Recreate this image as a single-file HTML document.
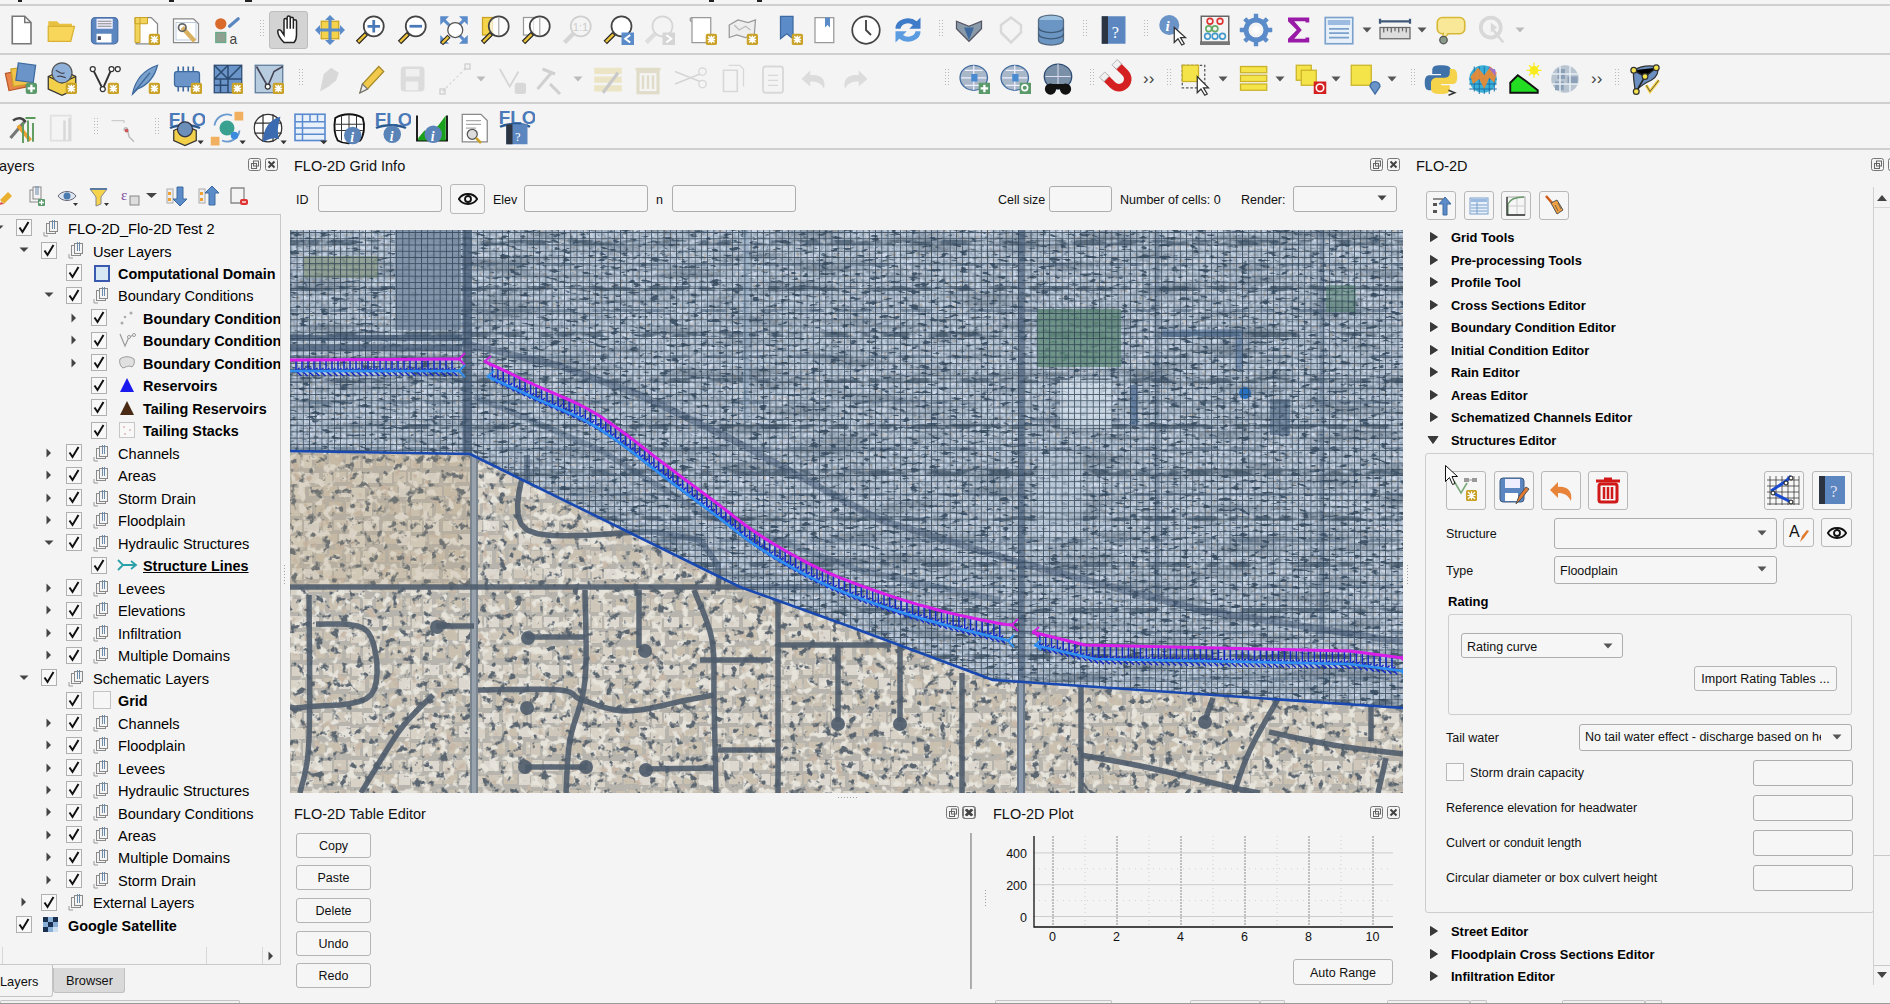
<!DOCTYPE html><html><head><meta charset="utf-8"><style>
html,body{margin:0;padding:0;}
body{width:1890px;height:1004px;position:relative;overflow:hidden;background:#f4f4f4;font-family:"Liberation Sans", sans-serif;}
.t{position:absolute;white-space:nowrap;font-family:"Liberation Sans", sans-serif;}
.inp{position:absolute;box-sizing:border-box;border:1px solid #adadad;border-radius:3px;background:#f6f6f6;}
.btn{position:absolute;box-sizing:border-box;border:1px solid #b4b4b4;border-radius:3px;background:#f6f6f6;font-size:12.5px;text-align:center;color:#111;padding-top:1px;}
.sep{position:absolute;height:2px;background:#cdcdcd;}
</style></head><body>
<div style="position:absolute;left:0px;top:0px;width:1890px;height:4px;background:#f4f4f4"></div><div style="position:absolute;left:18px;top:0px;width:4px;height:2px;background:#222"></div><div style="position:absolute;left:169px;top:0px;width:5px;height:2px;background:#222"></div><div style="position:absolute;left:245px;top:0px;width:7px;height:2px;background:#222"></div><div style="position:absolute;left:709px;top:0px;width:5px;height:2px;background:#222"></div><div style="position:absolute;left:757px;top:0px;width:5px;height:2px;background:#222"></div><div style="position:absolute;left:0px;top:4px;width:1890px;height:2px;background:#d0d0d0"></div><div style="position:absolute;left:0px;top:53px;width:1890px;height:2px;background:#cfcfcf"></div><div style="position:absolute;left:0px;top:102px;width:1890px;height:2px;background:#cfcfcf"></div><div style="position:absolute;left:0px;top:148px;width:1890px;height:2px;background:#cfcfcf"></div><div style="position:absolute;left:269px;top:11px;width:39px;height:38px;box-sizing:border-box;background:#d3d3d3;border:1px solid #bdbdbd;border-radius:3px"></div><svg style="position:absolute;left:1.0px;top:10.0px" width="40" height="40" viewBox="0 0 32 32"><path d="M9 5h10l5 5v17H9z" fill="#fff" stroke="#777" stroke-width="1.3"/><path d="M19 5v5h5" fill="none" stroke="#777" stroke-width="1.2"/></svg><svg style="position:absolute;left:42.0px;top:10.0px" width="40" height="40" viewBox="0 0 32 32"><path d="M5 9h7l2 2h10v4H5z" fill="#e8c040"/><path d="M5 13h21l-3 12H5z" fill="#f7d65a" stroke="#d9b235" stroke-width="1"/></svg><svg style="position:absolute;left:84.0px;top:10.0px" width="40" height="40" viewBox="0 0 32 32"><rect x="6" y="6" width="21" height="21" rx="3" fill="#5b86c0" stroke="#4a72a8"/><rect x="10" y="7" width="13" height="8" fill="#eef"/><path d="M11 9h11M11 11h11M11 13h11" stroke="#888" stroke-width="0.8"/><rect x="10" y="19" width="12" height="7" fill="#fff"/><rect x="11" y="21" width="2.5" height="3" fill="#445"/></svg><svg style="position:absolute;left:125.0px;top:10.0px" width="40" height="40" viewBox="0 0 32 32"><path d="M9 6h12l5 5v16H9z" fill="#fff" stroke="#888"/><path d="M8 6h4v20H8zM8 6h10v5H8z" fill="#f3d45a" stroke="#c9a227" stroke-width="0.8"/><rect x="19" y="19" width="9" height="9" rx="1.5" fill="#c9a227"/><path d="M23.5 20.5v6M20.5 23.5h6M21 21l5 5M26 21l-5 5" stroke="#fff" stroke-width="1.2"/></svg><svg style="position:absolute;left:166.0px;top:10.0px" width="40" height="40" viewBox="0 0 32 32"><path d="M6 7h16l4 4v15H6z" fill="#fff" stroke="#888"/><rect x="8" y="10" width="16" height="14" fill="none" stroke="#bcd" stroke-width="0.8"/><path d="M13 14l10 11" stroke="#d8b060" stroke-width="3.5"/><circle cx="13" cy="14" r="3" fill="none" stroke="#666" stroke-width="1.4"/></svg><svg style="position:absolute;left:207.0px;top:10.0px" width="40" height="40" viewBox="0 0 32 32"><circle cx="11" cy="11" r="4.5" fill="#d96a2b"/><path d="M18 13l7-6" stroke="#5b86c0" stroke-width="2.5" stroke-linecap="round"/><rect x="7" y="18" width="8" height="8" fill="#8fa090" stroke="#6a8"/><text x="18" y="27" font-size="11" font-family="Liberation Sans" fill="#444">a</text></svg><svg style="position:absolute;left:269.0px;top:10.0px" width="40" height="40" viewBox="0 0 32 32"><path d="M12 26c-3-3-5-7-5-9 0-1.5 2-1.5 3 0l2 3V8c0-1.5 2.5-1.5 2.5 0v7V6c0-1.5 2.5-1.5 2.5 0v9V7c0-1.5 2.5-1.5 2.5 0v8 -6c0-1.5 2.5-1.5 2.5 0v11c0 3-1 5-2 6z" fill="#fff" stroke="#222" stroke-width="1.2"/></svg><svg style="position:absolute;left:310.0px;top:10.0px" width="40" height="40" viewBox="0 0 32 32"><rect x="9" y="9" width="14" height="14" fill="#f5d34a" stroke="#c9a227"/><path d="M16 4l4 4h-8zM16 28l4-4h-8zM4 16l4-4v8zM28 16l-4-4v8z" fill="#5b8bc9"/><path d="M16 6v20M6 16h20" stroke="#5b8bc9" stroke-width="2.5"/></svg><svg style="position:absolute;left:350.0px;top:10.0px" width="40" height="40" viewBox="0 0 32 32"><circle cx="19" cy="13" r="8" fill="#fff" stroke="#444" stroke-width="1.4"/><path d="M19 8v10M14 13h10" stroke="#4a78b8" stroke-width="2.2"/><path d="M13 19l-7 7" stroke="#222" stroke-width="3.8"/><path d="M12.5 19.5l-6 6" stroke="#e9c13b" stroke-width="2"/></svg><svg style="position:absolute;left:392.0px;top:10.0px" width="40" height="40" viewBox="0 0 32 32"><circle cx="19" cy="13" r="8" fill="#fff" stroke="#444" stroke-width="1.4"/><path d="M14 13h10" stroke="#4a78b8" stroke-width="2.2"/><path d="M13 19l-7 7" stroke="#222" stroke-width="3.8"/><path d="M12.5 19.5l-6 6" stroke="#e9c13b" stroke-width="2"/></svg><svg style="position:absolute;left:434.0px;top:10.0px" width="40" height="40" viewBox="0 0 32 32"><path d="M5 5h7l-7 7zM27 5h-7l7 7zM5 27h7l-7-7zM27 27h-7l7-7z" fill="#5b8bc9"/><path d="M7 7l6 6M25 7l-6 6M25 25l-6-6" stroke="#5b8bc9" stroke-width="2.5"/><circle cx="17" cy="16" r="6" fill="#fff" stroke="#555"/><path d="M12 21l-6 6" stroke="#222" stroke-width="3.5"/><path d="M11.5 21.5l-5 5" stroke="#e9c13b" stroke-width="1.8"/></svg><svg style="position:absolute;left:475.0px;top:10.0px" width="40" height="40" viewBox="0 0 32 32"><rect x="6" y="6" width="8" height="14" fill="#f5d34a" stroke="#c9a227"/><circle cx="19" cy="13" r="8" fill="#fff" fill-opacity="0.7" stroke="#444" stroke-width="1.4"/><path d="M19 6v14" stroke="#aaa"/><path d="M13 19l-7 7" stroke="#222" stroke-width="3.8"/><path d="M12.5 19.5l-6 6" stroke="#e9c13b" stroke-width="2"/></svg><svg style="position:absolute;left:516.0px;top:10.0px" width="40" height="40" viewBox="0 0 32 32"><rect x="6" y="6" width="8" height="14" fill="#fff" stroke="#999"/><circle cx="19" cy="13" r="8" fill="#fff" fill-opacity="0.7" stroke="#444" stroke-width="1.4"/><path d="M19 6v14" stroke="#aaa"/><path d="M13 19l-7 7" stroke="#222" stroke-width="3.8"/><path d="M12.5 19.5l-6 6" stroke="#e9c13b" stroke-width="2"/></svg><svg style="position:absolute;left:557.0px;top:10.0px" width="40" height="40" viewBox="0 0 32 32"><circle cx="19" cy="13" r="8" fill="none" stroke="#d0d0d0" stroke-width="1.4"/><text x="12.5" y="17" font-size="9" font-family="Liberation Sans" fill="#ccc">1:1</text><path d="M13 19l-7 7" stroke="#d5d5d5" stroke-width="3.5"/></svg><svg style="position:absolute;left:599.0px;top:10.0px" width="40" height="40" viewBox="0 0 32 32"><circle cx="18" cy="13" r="8" fill="#fff" stroke="#444" stroke-width="1.4"/><path d="M12 19l-7 7" stroke="#222" stroke-width="3.8"/><path d="M11.5 19.5l-6 6" stroke="#e9c13b" stroke-width="2"/><rect x="18" y="18" width="10" height="10" fill="#5b8bc9"/><path d="M25 20l-4 3 4 3" stroke="#fff" stroke-width="1.6" fill="none"/></svg><svg style="position:absolute;left:640.0px;top:10.0px" width="40" height="40" viewBox="0 0 32 32"><circle cx="18" cy="13" r="8" fill="none" stroke="#d5d5d5" stroke-width="1.4"/><path d="M12 19l-7 7" stroke="#ddd" stroke-width="3.5"/><rect x="18" y="18" width="10" height="10" fill="#d5d5d5"/><path d="M21 20l4 3-4 3" stroke="#fff" stroke-width="1.6" fill="none"/></svg><svg style="position:absolute;left:682.0px;top:10.0px" width="40" height="40" viewBox="0 0 32 32"><path d="M8 6h15v20H8z" fill="#fff" stroke="#999"/><path d="M8 6c-2 0-2 3 0 3" stroke="#999" fill="none"/><rect x="19" y="19" width="9" height="9" rx="1.5" fill="#c9a227"/><path d="M23.5 20.5v6M20.5 23.5h6M21 21l5 5M26 21l-5 5" stroke="#fff" stroke-width="1.2"/></svg><svg style="position:absolute;left:723.0px;top:10.0px" width="40" height="40" viewBox="0 0 32 32"><path d="M5 12l7-4 8 2 6-2-1 12-7 2-7-2-6 2z" fill="#eee" stroke="#999"/><path d="M9 12l4 4 5-3 4 3" stroke="#bbb" fill="none"/><rect x="19" y="19" width="9" height="9" rx="1.5" fill="#c9a227"/><path d="M23.5 20.5v6M20.5 23.5h6M21 21l5 5M26 21l-5 5" stroke="#fff" stroke-width="1.2"/></svg><svg style="position:absolute;left:768.0px;top:10.0px" width="40" height="40" viewBox="0 0 32 32"><path d="M10 5h10v18l-5-4-5 4z" fill="#5b8bc9" stroke="#3e6aa0"/><rect x="19" y="19" width="9" height="9" rx="1.5" fill="#c9a227"/><path d="M23.5 20.5v6M20.5 23.5h6M21 21l5 5M26 21l-5 5" stroke="#fff" stroke-width="1.2"/></svg><svg style="position:absolute;left:805.0px;top:10.0px" width="40" height="40" viewBox="0 0 32 32"><path d="M8 6h15v20H8z" fill="#fff" stroke="#999"/><path d="M16 6h4v8l-2-2-2 2z" fill="#5b8bc9"/></svg><svg style="position:absolute;left:846.0px;top:10.0px" width="40" height="40" viewBox="0 0 32 32"><circle cx="16" cy="16" r="11" fill="#fff" stroke="#444" stroke-width="1.4"/><path d="M16 8v8l4 4" stroke="#444" stroke-width="1.5" fill="none"/></svg><svg style="position:absolute;left:888.0px;top:10.0px" width="40" height="40" viewBox="0 0 32 32"><path d="M6 15a10 8 0 0 1 17-6l3-3v9h-9l3-3a6 5 0 0 0-10 3z" fill="#3e7bc8"/><path d="M26 17a10 8 0 0 1-17 6l-3 3v-9h9l-3 3a6 5 0 0 0 10-3z" fill="#5b9be0"/></svg><svg style="position:absolute;left:949.0px;top:10.0px" width="40" height="40" viewBox="0 0 32 32"><path d="M6 9l10 4 10-4v6l-10 10-10-10z" fill="#8a9aa8" stroke="#556"/><path d="M12 14h8l-4 10z" fill="#3e6aa0"/></svg><svg style="position:absolute;left:991.0px;top:10.0px" width="40" height="40" viewBox="0 0 32 32"><path d="M8 12l8-6 8 6v6l-8 8-8-8z" fill="none" stroke="#d8d8d8" stroke-width="2"/></svg><svg style="position:absolute;left:1031.0px;top:10.0px" width="40" height="40" viewBox="0 0 32 32"><ellipse cx="16" cy="8" rx="10" ry="4" fill="#9cc0e0" stroke="#556a80"/><path d="M6 8v16c0 2.5 4.5 4 10 4s10-1.5 10-4V8" fill="#6b95c2" stroke="#556a80"/><path d="M6 14c0 2.5 4.5 4 10 4s10-1.5 10-4M6 19c0 2.5 4.5 4 10 4s10-1.5 10-4" fill="none" stroke="#3e5a78"/></svg><svg style="position:absolute;left:1093.0px;top:10.0px" width="40" height="40" viewBox="0 0 32 32"><rect x="7" y="5" width="19" height="22" fill="#5b86c0"/><rect x="7" y="5" width="5" height="22" fill="#2b3440"/><text x="15" y="22" font-size="13" font-family="Liberation Serif" fill="#fff">?</text></svg><svg style="position:absolute;left:1153.0px;top:10.0px" width="40" height="40" viewBox="0 0 32 32"><circle cx="13" cy="12" r="8" fill="#6a93c8"/><text x="10" y="17" font-size="12" font-style="italic" font-weight="bold" font-family="Liberation Serif" fill="#fff">i</text><path d="M17 14l0 12 3-3 3 5 2-1-3-5h4z" fill="#fff" stroke="#333"/></svg><svg style="position:absolute;left:1195.0px;top:10.0px" width="40" height="40" viewBox="0 0 32 32"><rect x="5" y="5" width="22" height="22" fill="none" stroke="#666" stroke-width="1.2"/><rect x="4" y="25" width="24" height="3" fill="#777"/><circle cx="12" cy="9" r="2.3" fill="none" stroke="#d33" stroke-width="1.3"/><circle cx="20" cy="9" r="2.3" fill="none" stroke="#d33" stroke-width="1.3"/><circle cx="11" cy="15" r="2.3" fill="none" stroke="#6a6" stroke-width="1.3"/><circle cx="16" cy="15" r="2.3" fill="none" stroke="#6a6" stroke-width="1.3"/><circle cx="10" cy="21" r="2.3" fill="none" stroke="#49c" stroke-width="1.3"/><circle cx="16" cy="21" r="2.3" fill="none" stroke="#49c" stroke-width="1.3"/><circle cx="22" cy="21" r="2.3" fill="none" stroke="#49c" stroke-width="1.3"/></svg><svg style="position:absolute;left:1236.0px;top:10.0px" width="40" height="40" viewBox="0 0 32 32"><circle cx="16" cy="16" r="8" fill="none" stroke="#5b8bc9" stroke-width="4"/><path d="M16 3v6M16 23v6M3 16h6M23 16h6M7 7l4 4M21 21l4 4M25 7l-4 4M7 25l4-4" stroke="#5b8bc9" stroke-width="3.5"/><circle cx="16" cy="16" r="3" fill="#fff"/></svg><svg style="position:absolute;left:1278.0px;top:10.0px" width="40" height="40" viewBox="0 0 32 32"><path d="M8 6h17v4h-3V9H13l6 7-6 7h9v-1h3v4H8v-3l7-7-7-7z" fill="#9a1aa8"/></svg><svg style="position:absolute;left:1319.0px;top:10.0px" width="40" height="40" viewBox="0 0 32 32"><rect x="5" y="6" width="22" height="21" fill="#e8f0fa" stroke="#7aa0cc" stroke-width="1.3"/><rect x="7" y="8" width="18" height="4" fill="#9bbbe0"/><path d="M8 15h16M8 18.5h16M8 22h16" stroke="#7aa0cc" stroke-width="1.4"/></svg><svg style="position:absolute;left:1375.0px;top:10.0px" width="40" height="40" viewBox="0 0 32 32"><path d="M4 9h24M4 7v4M28 7v4" stroke="#3e5a78" stroke-width="1.8"/><rect x="4" y="14" width="24" height="9" fill="#ddd" stroke="#666"/><path d="M7 14v4M10 14v3M13 14v4M16 14v3M19 14v4M22 14v3M25 14v4" stroke="#666"/></svg><svg style="position:absolute;left:1431.0px;top:10.0px" width="40" height="40" viewBox="0 0 32 32"><rect x="5" y="6" width="22" height="13" rx="4" fill="#f8e898" stroke="#d7b836" stroke-width="1.3"/><path d="M10 18l-1 6 5-5" fill="#f8e898" stroke="#d7b836"/><circle cx="10" cy="24" r="3" fill="#8a9a8a" stroke="#555"/></svg><svg style="position:absolute;left:1472.0px;top:10.0px" width="40" height="40" viewBox="0 0 32 32"><circle cx="15" cy="14" r="8" fill="none" stroke="#d8d8d8" stroke-width="3"/><path d="M15 10v8l5-4z" fill="#d8d8d8"/><path d="M17 16l8 10" stroke="#d8d8d8" stroke-width="2"/></svg><svg style="position:absolute;left:260px;top:20.0px" width="4" height="20"><rect x="0" y="0" width="1" height="1" fill="#b8b8b8"/><rect x="3" y="0" width="1" height="1" fill="#b8b8b8"/><rect x="0" y="3" width="1" height="1" fill="#b8b8b8"/><rect x="3" y="3" width="1" height="1" fill="#b8b8b8"/><rect x="0" y="6" width="1" height="1" fill="#b8b8b8"/><rect x="3" y="6" width="1" height="1" fill="#b8b8b8"/><rect x="0" y="9" width="1" height="1" fill="#b8b8b8"/><rect x="3" y="9" width="1" height="1" fill="#b8b8b8"/><rect x="0" y="12" width="1" height="1" fill="#b8b8b8"/><rect x="3" y="12" width="1" height="1" fill="#b8b8b8"/><rect x="0" y="15" width="1" height="1" fill="#b8b8b8"/><rect x="3" y="15" width="1" height="1" fill="#b8b8b8"/></svg><svg style="position:absolute;left:939px;top:20.0px" width="4" height="20"><rect x="0" y="0" width="1" height="1" fill="#b8b8b8"/><rect x="3" y="0" width="1" height="1" fill="#b8b8b8"/><rect x="0" y="3" width="1" height="1" fill="#b8b8b8"/><rect x="3" y="3" width="1" height="1" fill="#b8b8b8"/><rect x="0" y="6" width="1" height="1" fill="#b8b8b8"/><rect x="3" y="6" width="1" height="1" fill="#b8b8b8"/><rect x="0" y="9" width="1" height="1" fill="#b8b8b8"/><rect x="3" y="9" width="1" height="1" fill="#b8b8b8"/><rect x="0" y="12" width="1" height="1" fill="#b8b8b8"/><rect x="3" y="12" width="1" height="1" fill="#b8b8b8"/><rect x="0" y="15" width="1" height="1" fill="#b8b8b8"/><rect x="3" y="15" width="1" height="1" fill="#b8b8b8"/></svg><svg style="position:absolute;left:1083px;top:20.0px" width="4" height="20"><rect x="0" y="0" width="1" height="1" fill="#b8b8b8"/><rect x="3" y="0" width="1" height="1" fill="#b8b8b8"/><rect x="0" y="3" width="1" height="1" fill="#b8b8b8"/><rect x="3" y="3" width="1" height="1" fill="#b8b8b8"/><rect x="0" y="6" width="1" height="1" fill="#b8b8b8"/><rect x="3" y="6" width="1" height="1" fill="#b8b8b8"/><rect x="0" y="9" width="1" height="1" fill="#b8b8b8"/><rect x="3" y="9" width="1" height="1" fill="#b8b8b8"/><rect x="0" y="12" width="1" height="1" fill="#b8b8b8"/><rect x="3" y="12" width="1" height="1" fill="#b8b8b8"/><rect x="0" y="15" width="1" height="1" fill="#b8b8b8"/><rect x="3" y="15" width="1" height="1" fill="#b8b8b8"/></svg><svg style="position:absolute;left:1144px;top:20.0px" width="4" height="20"><rect x="0" y="0" width="1" height="1" fill="#b8b8b8"/><rect x="3" y="0" width="1" height="1" fill="#b8b8b8"/><rect x="0" y="3" width="1" height="1" fill="#b8b8b8"/><rect x="3" y="3" width="1" height="1" fill="#b8b8b8"/><rect x="0" y="6" width="1" height="1" fill="#b8b8b8"/><rect x="3" y="6" width="1" height="1" fill="#b8b8b8"/><rect x="0" y="9" width="1" height="1" fill="#b8b8b8"/><rect x="3" y="9" width="1" height="1" fill="#b8b8b8"/><rect x="0" y="12" width="1" height="1" fill="#b8b8b8"/><rect x="3" y="12" width="1" height="1" fill="#b8b8b8"/><rect x="0" y="15" width="1" height="1" fill="#b8b8b8"/><rect x="3" y="15" width="1" height="1" fill="#b8b8b8"/></svg><svg style="position:absolute;left:1362px;top:27px" width="10" height="6" viewBox="0 0 10 6"><path d="M0.5 0.5h9l-4.5 5z" fill="#555"/></svg><svg style="position:absolute;left:1417px;top:27px" width="10" height="6" viewBox="0 0 10 6"><path d="M0.5 0.5h9l-4.5 5z" fill="#555"/></svg><svg style="position:absolute;left:1515px;top:27px" width="10" height="6" viewBox="0 0 10 6"><path d="M0.5 0.5h9l-4.5 5z" fill="#bbb"/></svg><svg style="position:absolute;left:2.0px;top:59.0px" width="40" height="40" viewBox="0 0 32 32"><rect x="4" y="10" width="14" height="14" fill="#e9844a" stroke="#b85a2a" transform="rotate(-12 11 17)"/><rect x="8" y="7" width="14" height="14" fill="#f2c24a" stroke="#c9a227" transform="rotate(-8 15 14)"/><rect x="12" y="4" width="14" height="14" fill="#6b95c8" stroke="#3e6aa0" transform="rotate(8 19 11)"/><rect x="19" y="19" width="9" height="9" rx="2" fill="#5a9a6a"/><path d="M23.5 20.5v6M20.5 23.5h6" stroke="#fff" stroke-width="1.8"/></svg><svg style="position:absolute;left:42.0px;top:59.0px" width="40" height="40" viewBox="0 0 32 32"><path d="M5 14l11-5 11 5v10l-11 5-11-5z" fill="#f2d04a" stroke="#333"/><path d="M5 14l11 5 11-5" fill="none" stroke="#333"/><circle cx="16" cy="11" r="8" fill="#8fb0d8" stroke="#555"/><path d="M11 9c3 1 4 4 7 2M12 14c3-1 5 0 7 1" stroke="#445" fill="none"/><rect x="19" y="19" width="9" height="9" rx="1.5" fill="#c9a227"/><path d="M23.5 20.5v6M20.5 23.5h6M21 21l5 5M26 21l-5 5" stroke="#fff" stroke-width="1.2"/></svg><svg style="position:absolute;left:84.0px;top:59.0px" width="40" height="40" viewBox="0 0 32 32"><path d="M7 8l8 16 7-16" fill="none" stroke="#333" stroke-width="1.5"/><circle cx="7" cy="8" r="2" fill="#fff" stroke="#333"/><circle cx="15" cy="24" r="2" fill="#fff" stroke="#333"/><circle cx="22" cy="8" r="2" fill="#fff" stroke="#333"/><circle cx="27" cy="8" r="2" fill="#fff" stroke="#333"/><rect x="19" y="19" width="9" height="9" rx="1.5" fill="#c9a227"/><path d="M23.5 20.5v6M20.5 23.5h6M21 21l5 5M26 21l-5 5" stroke="#fff" stroke-width="1.2"/></svg><svg style="position:absolute;left:125.0px;top:59.0px" width="40" height="40" viewBox="0 0 32 32"><path d="M6 28C8 18 14 9 26 5c-2 8-6 15-16 19z" fill="#7aa0cc" stroke="#3e6aa0"/><path d="M6 28l14-17" stroke="#3e6aa0"/><rect x="19" y="19" width="9" height="9" rx="1.5" fill="#c9a227"/><path d="M23.5 20.5v6M20.5 23.5h6M21 21l5 5M26 21l-5 5" stroke="#fff" stroke-width="1.2"/></svg><svg style="position:absolute;left:167.0px;top:59.0px" width="40" height="40" viewBox="0 0 32 32"><rect x="6" y="10" width="20" height="12" rx="2" fill="#6b95c8" stroke="#3e6aa0"/><path d="M9 6v4M13 6v4M17 6v4M21 6v4M9 22v4M13 22v4M17 22v4M21 22v4" stroke="#3e6aa0" stroke-width="1.3"/><rect x="19" y="19" width="9" height="9" rx="1.5" fill="#c9a227"/><path d="M23.5 20.5v6M20.5 23.5h6M21 21l5 5M26 21l-5 5" stroke="#fff" stroke-width="1.2"/></svg><svg style="position:absolute;left:208.0px;top:59.0px" width="40" height="40" viewBox="0 0 32 32"><rect x="5" y="5" width="22" height="22" fill="#6b95c8" stroke="#2b4a70"/><path d="M5 16h22M16 5v22M5 21h11M10 16v11M5 5l11 11M16 5L5 16M27 5l-11 11" stroke="#2b4a70" stroke-width="1.2"/><rect x="19" y="19" width="9" height="9" rx="1.5" fill="#c9a227"/><path d="M23.5 20.5v6M20.5 23.5h6M21 21l5 5M26 21l-5 5" stroke="#fff" stroke-width="1.2"/></svg><svg style="position:absolute;left:249.0px;top:59.0px" width="40" height="40" viewBox="0 0 32 32"><rect x="5" y="5" width="22" height="22" fill="#b8cce0" stroke="#5a7a9a"/><path d="M6 6l9 16 5-12 7-4" fill="none" stroke="#445" stroke-width="1.3"/><circle cx="15" cy="22" r="2" fill="#fff" stroke="#333"/><rect x="19" y="19" width="9" height="9" rx="1.5" fill="#c9a227"/><path d="M23.5 20.5v6M20.5 23.5h6M21 21l5 5M26 21l-5 5" stroke="#fff" stroke-width="1.2"/></svg><svg style="position:absolute;left:310.0px;top:59.0px" width="40" height="40" viewBox="0 0 32 32"><path d="M8 26l3-14 6-5 6 4-2 6-6 5z" fill="#d8d8d8"/></svg><svg style="position:absolute;left:350.0px;top:59.0px" width="40" height="40" viewBox="0 0 32 32"><path d="M8 27l2-7 13-14 4 4-13 14z" fill="#f2c94a" stroke="#a58a2a"/><path d="M8 27l2-7 4 4z" fill="#eee" stroke="#777"/></svg><svg style="position:absolute;left:392.0px;top:59.0px" width="40" height="40" viewBox="0 0 32 32"><rect x="7" y="6" width="19" height="20" rx="3" fill="#dcdcdc"/><rect x="11" y="8" width="11" height="6" fill="#f0f0f0"/><rect x="11" y="18" width="10" height="7" fill="#f0f0f0"/></svg><svg style="position:absolute;left:435.0px;top:59.0px" width="40" height="40" viewBox="0 0 32 32"><path d="M6 26L26 6" stroke="#d5d5d5" stroke-dasharray="2 2"/><rect x="24" y="4" width="4" height="4" fill="none" stroke="#ccc"/><rect x="4" y="24" width="4" height="4" fill="none" stroke="#ccc"/></svg><svg style="position:absolute;left:491.0px;top:59.0px" width="40" height="40" viewBox="0 0 32 32"><path d="M7 8l8 14 7-12" fill="none" stroke="#d5d5d5" stroke-width="1.4"/><rect x="19" y="19" width="9" height="9" rx="2" fill="#d8d8d8"/></svg><svg style="position:absolute;left:530.0px;top:59.0px" width="40" height="40" viewBox="0 0 32 32"><path d="M6 24l12-14M10 8l10 4M16 20l8 8" stroke="#d0d0d0" stroke-width="2.5"/></svg><svg style="position:absolute;left:588.0px;top:59.0px" width="40" height="40" viewBox="0 0 32 32"><rect x="5" y="7" width="22" height="5" fill="#ebe5c5"/><rect x="5" y="14" width="22" height="5" fill="#ebe5c5"/><rect x="5" y="21" width="22" height="5" fill="#ebe5c5"/><path d="M12 27l12-16" stroke="#c8c8c8" stroke-width="2.5"/></svg><svg style="position:absolute;left:628.0px;top:59.0px" width="40" height="40" viewBox="0 0 32 32"><rect x="8" y="10" width="16" height="17" fill="none" stroke="#e0dcc8" stroke-width="2.5"/><path d="M6 8h20M12 13v11M16 13v11M20 13v11" stroke="#e0dcc8" stroke-width="2"/></svg><svg style="position:absolute;left:670.0px;top:59.0px" width="40" height="40" viewBox="0 0 32 32"><path d="M4 10l20 8M4 20l20-8" stroke="#d5d5d5" stroke-width="1.3"/><circle cx="26" cy="10" r="3" fill="none" stroke="#d5d5d5"/><circle cx="26" cy="20" r="3" fill="none" stroke="#d5d5d5"/></svg><svg style="position:absolute;left:711.0px;top:59.0px" width="40" height="40" viewBox="0 0 32 32"><path d="M10 9h11v17H10z" fill="none" stroke="#d8d8d8" stroke-width="1.3"/><path d="M14 5h9l3 3v14" fill="none" stroke="#d8d8d8"/></svg><svg style="position:absolute;left:753.0px;top:59.0px" width="40" height="40" viewBox="0 0 32 32"><rect x="8" y="6" width="16" height="21" rx="2" fill="none" stroke="#d8d8d8" stroke-width="1.5"/><path d="M12 13h8M12 17h8M12 21h8" stroke="#d8d8d8"/></svg><svg style="position:absolute;left:794.0px;top:59.0px" width="40" height="40" viewBox="0 0 32 32"><path d="M24 24c2-8-3-12-11-11v-4l-7 7 7 6v-4c5 0 9 1 11 6z" fill="#dcdcdc"/></svg><svg style="position:absolute;left:835.0px;top:59.0px" width="40" height="40" viewBox="0 0 32 32"><path d="M8 24c-2-8 3-12 11-11v-4l7 7-7 6v-4c-5 0-9 1-11 6z" fill="#dcdcdc"/></svg><svg style="position:absolute;left:955.0px;top:59.0px" width="40" height="40" viewBox="0 0 32 32"><ellipse cx="15" cy="15" rx="11" ry="10" fill="#a9b8c8" stroke="#3e6aa0"/><path d="M5 15h20M15 5v20M8 9h14M8 21h14" stroke="#eef" stroke-width="1"/><rect x="13" y="12" width="5" height="6" fill="#4a8ad0"/><rect x="19" y="19" width="9" height="9" fill="#5a9a6a"/><path d="M23.5 20.5v6M20.5 23.5h6" stroke="#fff" stroke-width="1.8"/></svg><svg style="position:absolute;left:996.0px;top:59.0px" width="40" height="40" viewBox="0 0 32 32"><ellipse cx="15" cy="15" rx="11" ry="10" fill="#a9b8c8" stroke="#3e6aa0"/><path d="M5 15h20M15 5v20M8 9h14M8 21h14" stroke="#eef" stroke-width="1"/><rect x="13" y="12" width="5" height="6" fill="#4a8ad0"/><rect x="19" y="19" width="9" height="9" fill="#5a9a6a"/><circle cx="23" cy="23" r="2.3" fill="none" stroke="#fff" stroke-width="1.3"/></svg><svg style="position:absolute;left:1038.0px;top:59.0px" width="40" height="40" viewBox="0 0 32 32"><ellipse cx="16" cy="14" rx="11" ry="10" fill="#7a90a8" stroke="#2b4a70"/><path d="M6 14h20M16 4v20" stroke="#dde" stroke-width="0.8"/><circle cx="10" cy="24" r="4.5" fill="#111"/><circle cx="22" cy="24" r="4.5" fill="#111"/><rect x="12" y="20" width="8" height="4" fill="#111"/></svg><svg style="position:absolute;left:1099.0px;top:59.0px" width="40" height="40" viewBox="0 0 32 32"><g transform="rotate(-45 16 16)"><path d="M9 6v10a7 7 0 0 0 14 0V6" fill="none" stroke="#d42020" stroke-width="6"/><path d="M6 4h6v5H6zM20 4h6v5h-6z" fill="#f0f0f0" stroke="#999" stroke-width="0.5"/></g></svg><svg style="position:absolute;left:1176.0px;top:59.0px" width="40" height="40" viewBox="0 0 32 32"><rect x="5" y="5" width="18" height="18" fill="none" stroke="#555" stroke-dasharray="2 1.5"/><rect x="5" y="5" width="13" height="13" fill="#f5e34a" stroke="#c9b227"/><path d="M17 14v13l3-3 3 5 2-1-3-5h4z" fill="#fff" stroke="#333"/></svg><svg style="position:absolute;left:1233.0px;top:59.0px" width="40" height="40" viewBox="0 0 32 32"><rect x="6" y="6" width="21" height="5" fill="#f5e34a" stroke="#c9b227"/><rect x="6" y="13" width="21" height="5" fill="#f5e34a" stroke="#c9b227"/><rect x="6" y="20" width="21" height="5" fill="#f5e34a" stroke="#c9b227"/></svg><svg style="position:absolute;left:1290.0px;top:59.0px" width="40" height="40" viewBox="0 0 32 32"><rect x="5" y="5" width="12" height="12" fill="#f5e34a" stroke="#c9b227"/><rect x="9" y="9" width="12" height="12" fill="#f5e34a" stroke="#c9b227"/><rect x="19" y="18" width="10" height="10" fill="#d42020"/><circle cx="24" cy="23" r="3" fill="none" stroke="#fff" stroke-width="1.3"/></svg><svg style="position:absolute;left:1345.0px;top:59.0px" width="40" height="40" viewBox="0 0 32 32"><rect x="5" y="5" width="16" height="16" fill="#f5e34a" stroke="#c9b227"/><path d="M24 28l-4-6a4 4 0 1 1 8 0z" fill="#6a93c8" stroke="#3e6aa0"/></svg><svg style="position:absolute;left:1421.0px;top:59.0px" width="40" height="40" viewBox="0 0 32 32"><path d="M16 5c-5 0-7 1-7 4v3h7v1H7c-3 0-4 2-4 6s1 6 4 6h2v-3c0-3 2-4 5-4h6c2 0 4-2 4-4V9c0-3-3-4-8-4z" fill="#3e72a8"/><path d="M16 28c5 0 7-1 7-4v-3h-7v-1h9c3 0 4-2 4-6s-1-6-4-6h-2v3c0 3-2 4-5 4h-6c-2 0-4 2-4 4v5c0 3 3 4 8 4z" fill="#f5d34a"/><path d="M22 25l5 2-5 2" fill="none" stroke="#333" stroke-width="1.2"/></svg><svg style="position:absolute;left:1463.0px;top:59.0px" width="40" height="40" viewBox="0 0 32 32"><circle cx="16" cy="16" r="11" fill="#3ab0d8"/><path d="M5 16h22M5 20h22M5 24h22M9 6v20M13 6v22M17 6v22M21 6v22M25 8v18" stroke="#1a70a8" stroke-width="0.8"/><path d="M6 14l6-7 5 6 5-7 5 5-2 8-4-4-4 9-4-8-5 4z" fill="#f08a30" opacity="0.9"/><path d="M20 6l6 3v5" fill="#a070d0"/></svg><svg style="position:absolute;left:1504.0px;top:59.0px" width="40" height="40" viewBox="0 0 32 32"><path d="M5 27v-8l6-6 7 5 9 7v2z" fill="#22dd22" stroke="#111" stroke-width="1.5"/><circle cx="24" cy="9" r="3.5" fill="#f8ec20"/><path d="M24 3v12M18 9h12M20 5l8 8M28 5l-8 8" stroke="#f8ec20" stroke-width="1"/></svg><svg style="position:absolute;left:1545.0px;top:59.0px" width="40" height="40" viewBox="0 0 32 32"><circle cx="16" cy="16" r="11" fill="#b8c4d0"/><path d="M10 8h6v8h-6zM18 14h8v6h-8zM8 18h7v7H8z" fill="#8ca0b8"/><path d="M5 12h22M5 20h22M12 5v22M20 5v22" stroke="#e8eef4" stroke-width="1.2"/></svg><svg style="position:absolute;left:1625.0px;top:59.0px" width="40" height="40" viewBox="0 0 32 32"><path d="M7 9c5-3 12-4 18-3 3 4 0 9-4 11-5 2-10 6-13 9 0-6-2-11-1-17z" fill="#6b8fc0" stroke="#333"/><path d="M7 9l9 5 9-7M9 26l7-12" stroke="#222" stroke-width="1.2"/><circle cx="7" cy="9" r="2.3" fill="#f5e34a" stroke="#333"/><circle cx="25" cy="7" r="2.3" fill="#f5e34a" stroke="#333"/><circle cx="16" cy="14" r="2.3" fill="#f5e34a" stroke="#333"/><circle cx="9" cy="26" r="2.3" fill="#f5e34a" stroke="#333"/><path d="M17 21l3 5 7-9" fill="none" stroke="#f5d34a" stroke-width="2.5"/><path d="M17 21l3 5 7-9" fill="none" stroke="#333" stroke-width="0.6"/></svg><svg style="position:absolute;left:299px;top:69.0px" width="4" height="20"><rect x="0" y="0" width="1" height="1" fill="#b8b8b8"/><rect x="3" y="0" width="1" height="1" fill="#b8b8b8"/><rect x="0" y="3" width="1" height="1" fill="#b8b8b8"/><rect x="3" y="3" width="1" height="1" fill="#b8b8b8"/><rect x="0" y="6" width="1" height="1" fill="#b8b8b8"/><rect x="3" y="6" width="1" height="1" fill="#b8b8b8"/><rect x="0" y="9" width="1" height="1" fill="#b8b8b8"/><rect x="3" y="9" width="1" height="1" fill="#b8b8b8"/><rect x="0" y="12" width="1" height="1" fill="#b8b8b8"/><rect x="3" y="12" width="1" height="1" fill="#b8b8b8"/><rect x="0" y="15" width="1" height="1" fill="#b8b8b8"/><rect x="3" y="15" width="1" height="1" fill="#b8b8b8"/></svg><svg style="position:absolute;left:945px;top:69.0px" width="4" height="20"><rect x="0" y="0" width="1" height="1" fill="#b8b8b8"/><rect x="3" y="0" width="1" height="1" fill="#b8b8b8"/><rect x="0" y="3" width="1" height="1" fill="#b8b8b8"/><rect x="3" y="3" width="1" height="1" fill="#b8b8b8"/><rect x="0" y="6" width="1" height="1" fill="#b8b8b8"/><rect x="3" y="6" width="1" height="1" fill="#b8b8b8"/><rect x="0" y="9" width="1" height="1" fill="#b8b8b8"/><rect x="3" y="9" width="1" height="1" fill="#b8b8b8"/><rect x="0" y="12" width="1" height="1" fill="#b8b8b8"/><rect x="3" y="12" width="1" height="1" fill="#b8b8b8"/><rect x="0" y="15" width="1" height="1" fill="#b8b8b8"/><rect x="3" y="15" width="1" height="1" fill="#b8b8b8"/></svg><svg style="position:absolute;left:1090px;top:69.0px" width="4" height="20"><rect x="0" y="0" width="1" height="1" fill="#b8b8b8"/><rect x="3" y="0" width="1" height="1" fill="#b8b8b8"/><rect x="0" y="3" width="1" height="1" fill="#b8b8b8"/><rect x="3" y="3" width="1" height="1" fill="#b8b8b8"/><rect x="0" y="6" width="1" height="1" fill="#b8b8b8"/><rect x="3" y="6" width="1" height="1" fill="#b8b8b8"/><rect x="0" y="9" width="1" height="1" fill="#b8b8b8"/><rect x="3" y="9" width="1" height="1" fill="#b8b8b8"/><rect x="0" y="12" width="1" height="1" fill="#b8b8b8"/><rect x="3" y="12" width="1" height="1" fill="#b8b8b8"/><rect x="0" y="15" width="1" height="1" fill="#b8b8b8"/><rect x="3" y="15" width="1" height="1" fill="#b8b8b8"/></svg><svg style="position:absolute;left:1167px;top:69.0px" width="4" height="20"><rect x="0" y="0" width="1" height="1" fill="#b8b8b8"/><rect x="3" y="0" width="1" height="1" fill="#b8b8b8"/><rect x="0" y="3" width="1" height="1" fill="#b8b8b8"/><rect x="3" y="3" width="1" height="1" fill="#b8b8b8"/><rect x="0" y="6" width="1" height="1" fill="#b8b8b8"/><rect x="3" y="6" width="1" height="1" fill="#b8b8b8"/><rect x="0" y="9" width="1" height="1" fill="#b8b8b8"/><rect x="3" y="9" width="1" height="1" fill="#b8b8b8"/><rect x="0" y="12" width="1" height="1" fill="#b8b8b8"/><rect x="3" y="12" width="1" height="1" fill="#b8b8b8"/><rect x="0" y="15" width="1" height="1" fill="#b8b8b8"/><rect x="3" y="15" width="1" height="1" fill="#b8b8b8"/></svg><svg style="position:absolute;left:1411px;top:69.0px" width="4" height="20"><rect x="0" y="0" width="1" height="1" fill="#b8b8b8"/><rect x="3" y="0" width="1" height="1" fill="#b8b8b8"/><rect x="0" y="3" width="1" height="1" fill="#b8b8b8"/><rect x="3" y="3" width="1" height="1" fill="#b8b8b8"/><rect x="0" y="6" width="1" height="1" fill="#b8b8b8"/><rect x="3" y="6" width="1" height="1" fill="#b8b8b8"/><rect x="0" y="9" width="1" height="1" fill="#b8b8b8"/><rect x="3" y="9" width="1" height="1" fill="#b8b8b8"/><rect x="0" y="12" width="1" height="1" fill="#b8b8b8"/><rect x="3" y="12" width="1" height="1" fill="#b8b8b8"/><rect x="0" y="15" width="1" height="1" fill="#b8b8b8"/><rect x="3" y="15" width="1" height="1" fill="#b8b8b8"/></svg><svg style="position:absolute;left:1615px;top:69.0px" width="4" height="20"><rect x="0" y="0" width="1" height="1" fill="#b8b8b8"/><rect x="3" y="0" width="1" height="1" fill="#b8b8b8"/><rect x="0" y="3" width="1" height="1" fill="#b8b8b8"/><rect x="3" y="3" width="1" height="1" fill="#b8b8b8"/><rect x="0" y="6" width="1" height="1" fill="#b8b8b8"/><rect x="3" y="6" width="1" height="1" fill="#b8b8b8"/><rect x="0" y="9" width="1" height="1" fill="#b8b8b8"/><rect x="3" y="9" width="1" height="1" fill="#b8b8b8"/><rect x="0" y="12" width="1" height="1" fill="#b8b8b8"/><rect x="3" y="12" width="1" height="1" fill="#b8b8b8"/><rect x="0" y="15" width="1" height="1" fill="#b8b8b8"/><rect x="3" y="15" width="1" height="1" fill="#b8b8b8"/></svg><svg style="position:absolute;left:476px;top:76px" width="10" height="6" viewBox="0 0 10 6"><path d="M0.5 0.5h9l-4.5 5z" fill="#bbb"/></svg><svg style="position:absolute;left:573px;top:76px" width="10" height="6" viewBox="0 0 10 6"><path d="M0.5 0.5h9l-4.5 5z" fill="#bbb"/></svg><svg style="position:absolute;left:1218px;top:76px" width="10" height="6" viewBox="0 0 10 6"><path d="M0.5 0.5h9l-4.5 5z" fill="#555"/></svg><svg style="position:absolute;left:1275px;top:76px" width="10" height="6" viewBox="0 0 10 6"><path d="M0.5 0.5h9l-4.5 5z" fill="#555"/></svg><svg style="position:absolute;left:1331px;top:76px" width="10" height="6" viewBox="0 0 10 6"><path d="M0.5 0.5h9l-4.5 5z" fill="#555"/></svg><svg style="position:absolute;left:1387px;top:76px" width="10" height="6" viewBox="0 0 10 6"><path d="M0.5 0.5h9l-4.5 5z" fill="#555"/></svg><div class="t" style="left:1143px;top:70.0px;line-height:18px;font-size:17px;color:#444;">&rsaquo;&rsaquo;</div><div class="t" style="left:1591px;top:70.0px;line-height:18px;font-size:17px;color:#444;">&rsaquo;&rsaquo;</div><svg style="position:absolute;left:3.0px;top:108.0px" width="40" height="40" viewBox="0 0 32 32"><path d="M6 24l12-14" stroke="#777" stroke-width="2.5"/><path d="M8 10c4-3 8-2 10 1" fill="none" stroke="#444" stroke-width="2"/><path d="M12 14l10 12" stroke="#e9a030" stroke-width="3"/><path d="M16 12v16M20 10v17M24 12v15M18 8h8" stroke="#5a9a5a" stroke-width="1.5"/></svg><svg style="position:absolute;left:42.0px;top:108.0px" width="40" height="40" viewBox="0 0 32 32"><path d="M7 6h16v20H7z" fill="none" stroke="#e0e0e0" stroke-width="1.4"/><path d="M18 10v16M22 8v18" stroke="#d8d8d8" stroke-width="2"/></svg><svg style="position:absolute;left:104.0px;top:108.0px" width="40" height="40" viewBox="0 0 32 32"><path d="M6 10h10v2" fill="none" stroke="#ccc"/><path d="M16 18c0-3 3-3 3 0l1 5 4 4" fill="none" stroke="#bbb" stroke-width="1.2"/><circle cx="18" cy="18" r="1.5" fill="#c55"/></svg><svg style="position:absolute;left:165.0px;top:108.0px" width="40" height="40" viewBox="0 0 32 32"><text x="3" y="14" font-size="15" font-weight="bold" font-family="Liberation Sans" fill="#4a7ab8" transform="scale(1 1)">FLO</text><path d="M4 16c6-3 18-3 24 0" stroke="#2b5a90" stroke-width="2" fill="none"/><path d="M7 18l9-4 9 4v8l-9 4-9-4z" fill="#f2d04a" stroke="#333"/><circle cx="16" cy="17" r="6" fill="#6b8fb8" stroke="#334"/><path d="M26 26h5l-2.5 3z" fill="#333"/></svg><svg style="position:absolute;left:207.0px;top:108.0px" width="40" height="40" viewBox="0 0 32 32"><circle cx="16" cy="16" r="6" fill="#3aa090"/><path d="M6 14a10 10 0 0 1 14-8M26 18a10 10 0 0 1-14 8" fill="none" stroke="#6a9ad0" stroke-width="1.5"/><rect x="22" y="3" width="7" height="7" fill="#f0b060"/><rect x="3" y="23" width="7" height="7" fill="#f0b060"/><circle cx="22" cy="22" r="3" fill="#3a8ae0"/><path d="M26 26h5l-2.5 3z" fill="#333"/></svg><svg style="position:absolute;left:248.0px;top:108.0px" width="40" height="40" viewBox="0 0 32 32"><circle cx="16" cy="16" r="11" fill="#fff" stroke="#333"/><path d="M5 12h22M5 20h22M12 5v22M20 5v22" stroke="#333" stroke-width="1"/><path d="M12 27c0-10 5-18 14-20-2 6-3 12-1 18-4-2-8 0-13 2z" fill="#3a6ab0"/><path d="M26 26h5l-2.5 3z" fill="#333"/></svg><svg style="position:absolute;left:290.0px;top:108.0px" width="40" height="40" viewBox="0 0 32 32"><rect x="4" y="5" width="24" height="21" fill="#e8f0fa" stroke="#5a8ad0" stroke-width="1.3"/><path d="M4 11h24M4 16h24M4 21h24M10 5v21M16 5v6M22 5v6" stroke="#5a8ad0" stroke-width="1.2"/><path d="M24 26h6l-3 3z" fill="#333"/></svg><svg style="position:absolute;left:329.0px;top:108.0px" width="40" height="40" viewBox="0 0 32 32"><path d="M5 8c6-4 16-4 22 0 2 6 1 14-2 18-6 3-13 3-18 0-3-5-3-12-2-18z" fill="#fff" stroke="#111" stroke-width="1.5"/><path d="M5 13h22M5 18h22M10 6v20M16 5v22M22 6v20" stroke="#333" stroke-width="0.8"/><circle cx="19" cy="22" r="7" fill="#5a84b8"/><text x="17" y="27" font-size="11" font-style="italic" font-weight="bold" font-family="Liberation Serif" fill="#fff">i</text></svg><svg style="position:absolute;left:371.0px;top:108.0px" width="40" height="40" viewBox="0 0 32 32"><text x="3" y="14" font-size="15" font-weight="bold" font-family="Liberation Sans" fill="#4a7ab8">FLO</text><path d="M4 16c6-3 18-3 24 0" stroke="#2b5a90" stroke-width="2" fill="none"/><circle cx="17" cy="21" r="7" fill="#5a84b8"/><text x="15" y="26" font-size="11" font-style="italic" font-weight="bold" font-family="Liberation Serif" fill="#fff">i</text></svg><svg style="position:absolute;left:412.0px;top:108.0px" width="40" height="40" viewBox="0 0 32 32"><path d="M4 6v20h24V6" fill="none" stroke="#111" stroke-width="1.5"/><path d="M5 24l5-6 5 2 6-6 6-8v20H5z" fill="#1aa01a"/><circle cx="17" cy="21" r="7" fill="#5a84b8"/><text x="15" y="26" font-size="11" font-style="italic" font-weight="bold" font-family="Liberation Serif" fill="#fff">i</text></svg><svg style="position:absolute;left:456.0px;top:108.0px" width="40" height="40" viewBox="0 0 32 32"><path d="M5 5h15l5 5v17H5z" fill="#fff" stroke="#888"/><path d="M8 10h12M8 13h12M8 16h8" stroke="#aaa"/><circle cx="13" cy="21" r="4" fill="#ddd" stroke="#555"/><path d="M16 24l4 4" stroke="#c9a227" stroke-width="2"/></svg><svg style="position:absolute;left:495.0px;top:108.0px" width="40" height="40" viewBox="0 0 32 32"><text x="3" y="13" font-size="15" font-weight="bold" font-family="Liberation Sans" fill="#4a7ab8">FLO</text><path d="M4 15c6-3 18-3 24 0" stroke="#2b5a90" stroke-width="2" fill="none"/><rect x="9" y="13" width="17" height="16" fill="#5b86c0"/><rect x="9" y="13" width="5" height="16" fill="#2b3440"/><text x="16" y="26" font-size="10" font-family="Liberation Serif" fill="#fff">?</text></svg><svg style="position:absolute;left:94px;top:118.0px" width="4" height="20"><rect x="0" y="0" width="1" height="1" fill="#b8b8b8"/><rect x="3" y="0" width="1" height="1" fill="#b8b8b8"/><rect x="0" y="3" width="1" height="1" fill="#b8b8b8"/><rect x="3" y="3" width="1" height="1" fill="#b8b8b8"/><rect x="0" y="6" width="1" height="1" fill="#b8b8b8"/><rect x="3" y="6" width="1" height="1" fill="#b8b8b8"/><rect x="0" y="9" width="1" height="1" fill="#b8b8b8"/><rect x="3" y="9" width="1" height="1" fill="#b8b8b8"/><rect x="0" y="12" width="1" height="1" fill="#b8b8b8"/><rect x="3" y="12" width="1" height="1" fill="#b8b8b8"/><rect x="0" y="15" width="1" height="1" fill="#b8b8b8"/><rect x="3" y="15" width="1" height="1" fill="#b8b8b8"/></svg><svg style="position:absolute;left:155px;top:118.0px" width="4" height="20"><rect x="0" y="0" width="1" height="1" fill="#b8b8b8"/><rect x="3" y="0" width="1" height="1" fill="#b8b8b8"/><rect x="0" y="3" width="1" height="1" fill="#b8b8b8"/><rect x="3" y="3" width="1" height="1" fill="#b8b8b8"/><rect x="0" y="6" width="1" height="1" fill="#b8b8b8"/><rect x="3" y="6" width="1" height="1" fill="#b8b8b8"/><rect x="0" y="9" width="1" height="1" fill="#b8b8b8"/><rect x="3" y="9" width="1" height="1" fill="#b8b8b8"/><rect x="0" y="12" width="1" height="1" fill="#b8b8b8"/><rect x="3" y="12" width="1" height="1" fill="#b8b8b8"/><rect x="0" y="15" width="1" height="1" fill="#b8b8b8"/><rect x="3" y="15" width="1" height="1" fill="#b8b8b8"/></svg><div class="t" style="left:-1px;top:157.0px;line-height:18px;font-size:14.5px;color:#111;">ayers</div><svg style="position:absolute;left:248px;top:158px" width="32" height="14" viewBox="0 0 32 14"><rect x="0.5" y="0.5" width="12" height="12" rx="2" fill="none" stroke="#777"/><rect x="3.5" y="5.5" width="5" height="5" fill="none" stroke="#666"/><rect x="5.5" y="3" width="5" height="5" fill="none" stroke="#666"/><rect x="17.5" y="0.5" width="12" height="12" rx="2" fill="none" stroke="#777"/><path d="M20.5 3.5l6 6M26.5 3.5l-6 6" stroke="#444" stroke-width="2"/></svg><svg style="position:absolute;left:0px;top:184px" width="250" height="24" viewBox="0 0 250 24"><path d="M0 16l8-8 4 4-8 8z" fill="#e9b030"/><path d="M1 18l-2 3 5-1" fill="#d44"/><rect x="30" y="6" width="9" height="12" fill="none" stroke="#888"/><rect x="33" y="3" width="8" height="12" fill="#f4f4f4" stroke="#888"/><path d="M36 2v9M38 2v9" stroke="#6b8aaa"/><rect x="38" y="15" width="7" height="7" rx="1" fill="#5a9a6a"/><path d="M41.5 16v5M39 18.5h5" stroke="#fff" stroke-width="1.3"/><path d="M58 12c4-6 14-6 18 0-4 6-14 6-18 0z" fill="#dde6f0" stroke="#667"/><circle cx="67" cy="12" r="3.5" fill="#4a7ab0"/><path d="M73 19h5l-2.5 3z" fill="#333"/><path d="M90 5h17l-6 8v7l-5 2v-9z" fill="#f5d34a" stroke="#888"/><path d="M90 5h17" stroke="#5a7aa0" stroke-width="2"/><path d="M104 19h5l-2.5 3z" fill="#333"/><text x="121" y="16" font-size="15" font-family="Liberation Serif" fill="#7a4aa0">&#949;</text><rect x="130" y="12" width="9" height="9" fill="#ddd" stroke="#888"/><path d="M146 9h11l-5.5 5z" fill="#444"/><rect x="167" y="5" width="6" height="14" fill="#eee" stroke="#aaa"/><rect x="168" y="8" width="3" height="3" fill="#f0a030"/><rect x="168" y="14" width="3" height="3" fill="#f0a030"/><path d="M177 3v12h-4l7 7 7-7h-4V3z" fill="#5b8bc9" stroke="#3e6aa0"/><rect x="199" y="5" width="6" height="14" fill="#eee" stroke="#aaa"/><rect x="200" y="8" width="3" height="3" fill="#f0a030"/><rect x="200" y="14" width="3" height="3" fill="#f0a030"/><path d="M209 21V9h-4l7-7 7 7h-4v12z" fill="#5b8bc9" stroke="#3e6aa0"/><path d="M231 4h13v12M231 4v15h9" fill="none" stroke="#888" stroke-width="1.3"/><rect x="240" y="15" width="8" height="6" rx="2" fill="#d33"/><path d="M242 18h4" stroke="#fff" stroke-width="1.3"/></svg><div style="position:absolute;left:0px;top:214px;width:281px;height:1px;background:#c9c9c9"></div><div style="position:absolute;left:280px;top:214px;width:1px;height:751px;background:#c9c9c9"></div><div style="position:absolute;left:0px;top:964px;width:281px;height:1px;background:#c9c9c9"></div><div style="position:absolute;left:0px;top:946px;width:280px;height:18px;background:#f4f4f4"></div><div style="position:absolute;left:2px;top:947px;width:1px;height:17px;background:#d8d8d8"></div><div style="position:absolute;left:206px;top:947px;width:1px;height:17px;background:#d8d8d8"></div><div style="position:absolute;left:262px;top:947px;width:1px;height:17px;background:#d8d8d8"></div><svg style="position:absolute;left:268px;top:951px" width="6" height="10"><path d="M0.5 0.5v9l4.5-4.5z" fill="#444"/></svg><div style="position:absolute;left:0;top:215px;width:280px;height:731px;overflow:hidden"><svg style="position:absolute;left:-6px;top:10.0px" width="10" height="6"><path d="M0.5 0.5h9l-4.5 4.5z" fill="#444"/></svg><svg style="position:absolute;left:16px;top:4px" width="16" height="17" viewBox="0 0 16 17"><rect x="0.5" y="0.5" width="15" height="16" fill="#f8f8f8" stroke="#b0b0b0"/><path d="M3.5 8.5l3 4.5 6-10" fill="none" stroke="#111" stroke-width="2"/></svg><svg style="position:absolute;left:43px;top:4px" width="16" height="18" viewBox="0 0 16 18"><path d="M1 17h4M1 17v-4" stroke="#999" stroke-width="1"/><rect x="3.5" y="4.5" width="9" height="10" fill="none" stroke="#8a8a8a"/><rect x="6.5" y="2.5" width="8" height="10" fill="#f4f4f4" stroke="#8a8a8a"/><path d="M9.5 1v9M11.5 1v9" stroke="#6b8aaa" stroke-width="1"/><path d="M8.5 12.5h5" stroke="#888"/></svg><div class="t" style="left:68px;top:5.0px;line-height:18px;font-size:14.6px;color:#000;">FLO-2D_Flo-2D Test 2</div><svg style="position:absolute;left:19px;top:32.47999999999999px" width="10" height="6"><path d="M0.5 0.5h9l-4.5 4.5z" fill="#444"/></svg><svg style="position:absolute;left:41px;top:27px" width="16" height="17" viewBox="0 0 16 17"><rect x="0.5" y="0.5" width="15" height="16" fill="#f8f8f8" stroke="#b0b0b0"/><path d="M3.5 8.5l3 4.5 6-10" fill="none" stroke="#111" stroke-width="2"/></svg><svg style="position:absolute;left:68px;top:26px" width="16" height="18" viewBox="0 0 16 18"><path d="M1 17h4M1 17v-4" stroke="#999" stroke-width="1"/><rect x="3.5" y="4.5" width="9" height="10" fill="none" stroke="#8a8a8a"/><rect x="6.5" y="2.5" width="8" height="10" fill="#f4f4f4" stroke="#8a8a8a"/><path d="M9.5 1v9M11.5 1v9" stroke="#6b8aaa" stroke-width="1"/><path d="M8.5 12.5h5" stroke="#888"/></svg><div class="t" style="left:93px;top:27.5px;line-height:18px;font-size:14.6px;color:#000;">User Layers</div><svg style="position:absolute;left:66px;top:49px" width="16" height="17" viewBox="0 0 16 17"><rect x="0.5" y="0.5" width="15" height="16" fill="#f8f8f8" stroke="#b0b0b0"/><path d="M3.5 8.5l3 4.5 6-10" fill="none" stroke="#111" stroke-width="2"/></svg><div style="position:absolute;left:94px;top:50px;width:16px;height:17px;box-sizing:border-box;background:#d6e8f4;border:2px solid #3a5ab0"></div><div class="t" style="left:118px;top:50.0px;line-height:18px;font-size:14.4px;font-weight:bold;color:#000;">Computational Domain</div><svg style="position:absolute;left:44px;top:77.44px" width="10" height="6"><path d="M0.5 0.5h9l-4.5 4.5z" fill="#444"/></svg><svg style="position:absolute;left:66px;top:72px" width="16" height="17" viewBox="0 0 16 17"><rect x="0.5" y="0.5" width="15" height="16" fill="#f8f8f8" stroke="#b0b0b0"/><path d="M3.5 8.5l3 4.5 6-10" fill="none" stroke="#111" stroke-width="2"/></svg><svg style="position:absolute;left:93px;top:71px" width="16" height="18" viewBox="0 0 16 18"><path d="M1 17h4M1 17v-4" stroke="#999" stroke-width="1"/><rect x="3.5" y="4.5" width="9" height="10" fill="none" stroke="#8a8a8a"/><rect x="6.5" y="2.5" width="8" height="10" fill="#f4f4f4" stroke="#8a8a8a"/><path d="M9.5 1v9M11.5 1v9" stroke="#6b8aaa" stroke-width="1"/><path d="M8.5 12.5h5" stroke="#888"/></svg><div class="t" style="left:118px;top:72.4px;line-height:18px;font-size:14.6px;color:#000;">Boundary Conditions</div><svg style="position:absolute;left:71px;top:97.92000000000002px" width="6" height="10"><path d="M0.5 0.5v9l4.5-4.5z" fill="#444"/></svg><svg style="position:absolute;left:91px;top:94px" width="16" height="17" viewBox="0 0 16 17"><rect x="0.5" y="0.5" width="15" height="16" fill="#f8f8f8" stroke="#b0b0b0"/><path d="M3.5 8.5l3 4.5 6-10" fill="none" stroke="#111" stroke-width="2"/></svg><svg style="position:absolute;left:118px;top:94px" width="18" height="18"><circle cx="4" cy="14" r="1.5" fill="#aaa"/><circle cx="7" cy="8" r="1.3" fill="#aaa"/><circle cx="13" cy="4" r="1.5" fill="#aaa"/></svg><div class="t" style="left:143px;top:94.9px;line-height:18px;font-size:14.4px;font-weight:bold;color:#000;">Boundary Conditions</div><svg style="position:absolute;left:71px;top:120.39999999999998px" width="6" height="10"><path d="M0.5 0.5v9l4.5-4.5z" fill="#444"/></svg><svg style="position:absolute;left:91px;top:117px" width="16" height="17" viewBox="0 0 16 17"><rect x="0.5" y="0.5" width="15" height="16" fill="#f8f8f8" stroke="#b0b0b0"/><path d="M3.5 8.5l3 4.5 6-10" fill="none" stroke="#111" stroke-width="2"/></svg><svg style="position:absolute;left:118px;top:116px" width="18" height="18"><path d="M2 3l5 12 4-9 5-2" fill="none" stroke="#999" stroke-width="1.2"/><circle cx="11" cy="6" r="1.5" fill="#fff" stroke="#999"/><circle cx="16" cy="4" r="1.5" fill="#fff" stroke="#999"/></svg><div class="t" style="left:143px;top:117.4px;line-height:18px;font-size:14.4px;font-weight:bold;color:#000;">Boundary Conditions</div><svg style="position:absolute;left:71px;top:142.88px" width="6" height="10"><path d="M0.5 0.5v9l4.5-4.5z" fill="#444"/></svg><svg style="position:absolute;left:91px;top:139px" width="16" height="17" viewBox="0 0 16 17"><rect x="0.5" y="0.5" width="15" height="16" fill="#f8f8f8" stroke="#b0b0b0"/><path d="M3.5 8.5l3 4.5 6-10" fill="none" stroke="#111" stroke-width="2"/></svg><svg style="position:absolute;left:118px;top:139px" width="18" height="18"><path d="M2 5c4-3 10-3 14 0 1 3 0 6-2 8-3-2-6 0-9 1-3-2-4-6-3-9z" fill="#e0e0e0" stroke="#999"/></svg><div class="t" style="left:143px;top:139.9px;line-height:18px;font-size:14.4px;font-weight:bold;color:#000;">Boundary Conditions</div><svg style="position:absolute;left:91px;top:162px" width="16" height="17" viewBox="0 0 16 17"><rect x="0.5" y="0.5" width="15" height="16" fill="#f8f8f8" stroke="#b0b0b0"/><path d="M3.5 8.5l3 4.5 6-10" fill="none" stroke="#111" stroke-width="2"/></svg><svg style="position:absolute;left:118px;top:161px" width="18" height="18"><path d="M9 2l7 14H2z" fill="#1a1aee"/></svg><div class="t" style="left:143px;top:162.4px;line-height:18px;font-size:14.4px;font-weight:bold;color:#000;">Reservoirs</div><svg style="position:absolute;left:91px;top:184px" width="16" height="17" viewBox="0 0 16 17"><rect x="0.5" y="0.5" width="15" height="16" fill="#f8f8f8" stroke="#b0b0b0"/><path d="M3.5 8.5l3 4.5 6-10" fill="none" stroke="#111" stroke-width="2"/></svg><svg style="position:absolute;left:118px;top:184px" width="18" height="18"><path d="M9 2l7 14H2z" fill="#4a2a14"/></svg><div class="t" style="left:143px;top:184.8px;line-height:18px;font-size:14.4px;font-weight:bold;color:#000;">Tailing Reservoirs</div><svg style="position:absolute;left:91px;top:207px" width="16" height="17" viewBox="0 0 16 17"><rect x="0.5" y="0.5" width="15" height="16" fill="#f8f8f8" stroke="#b0b0b0"/><path d="M3.5 8.5l3 4.5 6-10" fill="none" stroke="#111" stroke-width="2"/></svg><svg style="position:absolute;left:118px;top:206px" width="18" height="18"><rect x="1.5" y="1.5" width="15" height="15" fill="#f8f8f8" stroke="#999" stroke-dasharray="1 1"/><circle cx="6" cy="6" r="0.8" fill="#c88"/><circle cx="12" cy="9" r="0.8" fill="#c88"/><circle cx="7" cy="13" r="0.8" fill="#c88"/></svg><div class="t" style="left:143px;top:207.3px;line-height:18px;font-size:14.4px;font-weight:bold;color:#000;">Tailing Stacks</div><svg style="position:absolute;left:46px;top:232.8px" width="6" height="10"><path d="M0.5 0.5v9l4.5-4.5z" fill="#444"/></svg><svg style="position:absolute;left:66px;top:229px" width="16" height="17" viewBox="0 0 16 17"><rect x="0.5" y="0.5" width="15" height="16" fill="#f8f8f8" stroke="#b0b0b0"/><path d="M3.5 8.5l3 4.5 6-10" fill="none" stroke="#111" stroke-width="2"/></svg><svg style="position:absolute;left:93px;top:229px" width="16" height="18" viewBox="0 0 16 18"><path d="M1 17h4M1 17v-4" stroke="#999" stroke-width="1"/><rect x="3.5" y="4.5" width="9" height="10" fill="none" stroke="#8a8a8a"/><rect x="6.5" y="2.5" width="8" height="10" fill="#f4f4f4" stroke="#8a8a8a"/><path d="M9.5 1v9M11.5 1v9" stroke="#6b8aaa" stroke-width="1"/><path d="M8.5 12.5h5" stroke="#888"/></svg><div class="t" style="left:118px;top:229.8px;line-height:18px;font-size:14.6px;color:#000;">Channels</div><svg style="position:absolute;left:46px;top:255.27999999999997px" width="6" height="10"><path d="M0.5 0.5v9l4.5-4.5z" fill="#444"/></svg><svg style="position:absolute;left:66px;top:252px" width="16" height="17" viewBox="0 0 16 17"><rect x="0.5" y="0.5" width="15" height="16" fill="#f8f8f8" stroke="#b0b0b0"/><path d="M3.5 8.5l3 4.5 6-10" fill="none" stroke="#111" stroke-width="2"/></svg><svg style="position:absolute;left:93px;top:251px" width="16" height="18" viewBox="0 0 16 18"><path d="M1 17h4M1 17v-4" stroke="#999" stroke-width="1"/><rect x="3.5" y="4.5" width="9" height="10" fill="none" stroke="#8a8a8a"/><rect x="6.5" y="2.5" width="8" height="10" fill="#f4f4f4" stroke="#8a8a8a"/><path d="M9.5 1v9M11.5 1v9" stroke="#6b8aaa" stroke-width="1"/><path d="M8.5 12.5h5" stroke="#888"/></svg><div class="t" style="left:118px;top:252.3px;line-height:18px;font-size:14.6px;color:#000;">Areas</div><svg style="position:absolute;left:46px;top:277.76px" width="6" height="10"><path d="M0.5 0.5v9l4.5-4.5z" fill="#444"/></svg><svg style="position:absolute;left:66px;top:274px" width="16" height="17" viewBox="0 0 16 17"><rect x="0.5" y="0.5" width="15" height="16" fill="#f8f8f8" stroke="#b0b0b0"/><path d="M3.5 8.5l3 4.5 6-10" fill="none" stroke="#111" stroke-width="2"/></svg><svg style="position:absolute;left:93px;top:274px" width="16" height="18" viewBox="0 0 16 18"><path d="M1 17h4M1 17v-4" stroke="#999" stroke-width="1"/><rect x="3.5" y="4.5" width="9" height="10" fill="none" stroke="#8a8a8a"/><rect x="6.5" y="2.5" width="8" height="10" fill="#f4f4f4" stroke="#8a8a8a"/><path d="M9.5 1v9M11.5 1v9" stroke="#6b8aaa" stroke-width="1"/><path d="M8.5 12.5h5" stroke="#888"/></svg><div class="t" style="left:118px;top:274.8px;line-height:18px;font-size:14.6px;color:#000;">Storm Drain</div><svg style="position:absolute;left:46px;top:300.24px" width="6" height="10"><path d="M0.5 0.5v9l4.5-4.5z" fill="#444"/></svg><svg style="position:absolute;left:66px;top:297px" width="16" height="17" viewBox="0 0 16 17"><rect x="0.5" y="0.5" width="15" height="16" fill="#f8f8f8" stroke="#b0b0b0"/><path d="M3.5 8.5l3 4.5 6-10" fill="none" stroke="#111" stroke-width="2"/></svg><svg style="position:absolute;left:93px;top:296px" width="16" height="18" viewBox="0 0 16 18"><path d="M1 17h4M1 17v-4" stroke="#999" stroke-width="1"/><rect x="3.5" y="4.5" width="9" height="10" fill="none" stroke="#8a8a8a"/><rect x="6.5" y="2.5" width="8" height="10" fill="#f4f4f4" stroke="#8a8a8a"/><path d="M9.5 1v9M11.5 1v9" stroke="#6b8aaa" stroke-width="1"/><path d="M8.5 12.5h5" stroke="#888"/></svg><div class="t" style="left:118px;top:297.2px;line-height:18px;font-size:14.6px;color:#000;">Floodplain</div><svg style="position:absolute;left:44px;top:324.72px" width="10" height="6"><path d="M0.5 0.5h9l-4.5 4.5z" fill="#444"/></svg><svg style="position:absolute;left:66px;top:319px" width="16" height="17" viewBox="0 0 16 17"><rect x="0.5" y="0.5" width="15" height="16" fill="#f8f8f8" stroke="#b0b0b0"/><path d="M3.5 8.5l3 4.5 6-10" fill="none" stroke="#111" stroke-width="2"/></svg><svg style="position:absolute;left:93px;top:319px" width="16" height="18" viewBox="0 0 16 18"><path d="M1 17h4M1 17v-4" stroke="#999" stroke-width="1"/><rect x="3.5" y="4.5" width="9" height="10" fill="none" stroke="#8a8a8a"/><rect x="6.5" y="2.5" width="8" height="10" fill="#f4f4f4" stroke="#8a8a8a"/><path d="M9.5 1v9M11.5 1v9" stroke="#6b8aaa" stroke-width="1"/><path d="M8.5 12.5h5" stroke="#888"/></svg><div class="t" style="left:118px;top:319.7px;line-height:18px;font-size:14.6px;color:#000;">Hydraulic Structures</div><svg style="position:absolute;left:91px;top:342px" width="16" height="17" viewBox="0 0 16 17"><rect x="0.5" y="0.5" width="15" height="16" fill="#f8f8f8" stroke="#b0b0b0"/><path d="M3.5 8.5l3 4.5 6-10" fill="none" stroke="#111" stroke-width="2"/></svg><svg style="position:absolute;left:116px;top:341px" width="22" height="18"><path d="M2 4l5 5-5 5M7 9h13M15 5l5 4-5 4" fill="none" stroke="#2aa0a8" stroke-width="1.8"/></svg><div class="t" style="left:143px;top:342.2px;line-height:18px;font-size:14.4px;font-weight:bold;color:#000;text-decoration:underline;">Structure Lines</div><svg style="position:absolute;left:46px;top:367.68000000000006px" width="6" height="10"><path d="M0.5 0.5v9l4.5-4.5z" fill="#444"/></svg><svg style="position:absolute;left:66px;top:364px" width="16" height="17" viewBox="0 0 16 17"><rect x="0.5" y="0.5" width="15" height="16" fill="#f8f8f8" stroke="#b0b0b0"/><path d="M3.5 8.5l3 4.5 6-10" fill="none" stroke="#111" stroke-width="2"/></svg><svg style="position:absolute;left:93px;top:364px" width="16" height="18" viewBox="0 0 16 18"><path d="M1 17h4M1 17v-4" stroke="#999" stroke-width="1"/><rect x="3.5" y="4.5" width="9" height="10" fill="none" stroke="#8a8a8a"/><rect x="6.5" y="2.5" width="8" height="10" fill="#f4f4f4" stroke="#8a8a8a"/><path d="M9.5 1v9M11.5 1v9" stroke="#6b8aaa" stroke-width="1"/><path d="M8.5 12.5h5" stroke="#888"/></svg><div class="t" style="left:118px;top:364.7px;line-height:18px;font-size:14.6px;color:#000;">Levees</div><svg style="position:absolute;left:46px;top:390.1600000000001px" width="6" height="10"><path d="M0.5 0.5v9l4.5-4.5z" fill="#444"/></svg><svg style="position:absolute;left:66px;top:387px" width="16" height="17" viewBox="0 0 16 17"><rect x="0.5" y="0.5" width="15" height="16" fill="#f8f8f8" stroke="#b0b0b0"/><path d="M3.5 8.5l3 4.5 6-10" fill="none" stroke="#111" stroke-width="2"/></svg><svg style="position:absolute;left:93px;top:386px" width="16" height="18" viewBox="0 0 16 18"><path d="M1 17h4M1 17v-4" stroke="#999" stroke-width="1"/><rect x="3.5" y="4.5" width="9" height="10" fill="none" stroke="#8a8a8a"/><rect x="6.5" y="2.5" width="8" height="10" fill="#f4f4f4" stroke="#8a8a8a"/><path d="M9.5 1v9M11.5 1v9" stroke="#6b8aaa" stroke-width="1"/><path d="M8.5 12.5h5" stroke="#888"/></svg><div class="t" style="left:118px;top:387.2px;line-height:18px;font-size:14.6px;color:#000;">Elevations</div><svg style="position:absolute;left:46px;top:412.64px" width="6" height="10"><path d="M0.5 0.5v9l4.5-4.5z" fill="#444"/></svg><svg style="position:absolute;left:66px;top:409px" width="16" height="17" viewBox="0 0 16 17"><rect x="0.5" y="0.5" width="15" height="16" fill="#f8f8f8" stroke="#b0b0b0"/><path d="M3.5 8.5l3 4.5 6-10" fill="none" stroke="#111" stroke-width="2"/></svg><svg style="position:absolute;left:93px;top:409px" width="16" height="18" viewBox="0 0 16 18"><path d="M1 17h4M1 17v-4" stroke="#999" stroke-width="1"/><rect x="3.5" y="4.5" width="9" height="10" fill="none" stroke="#8a8a8a"/><rect x="6.5" y="2.5" width="8" height="10" fill="#f4f4f4" stroke="#8a8a8a"/><path d="M9.5 1v9M11.5 1v9" stroke="#6b8aaa" stroke-width="1"/><path d="M8.5 12.5h5" stroke="#888"/></svg><div class="t" style="left:118px;top:409.6px;line-height:18px;font-size:14.6px;color:#000;">Infiltration</div><svg style="position:absolute;left:46px;top:435.12px" width="6" height="10"><path d="M0.5 0.5v9l4.5-4.5z" fill="#444"/></svg><svg style="position:absolute;left:66px;top:432px" width="16" height="17" viewBox="0 0 16 17"><rect x="0.5" y="0.5" width="15" height="16" fill="#f8f8f8" stroke="#b0b0b0"/><path d="M3.5 8.5l3 4.5 6-10" fill="none" stroke="#111" stroke-width="2"/></svg><svg style="position:absolute;left:93px;top:431px" width="16" height="18" viewBox="0 0 16 18"><path d="M1 17h4M1 17v-4" stroke="#999" stroke-width="1"/><rect x="3.5" y="4.5" width="9" height="10" fill="none" stroke="#8a8a8a"/><rect x="6.5" y="2.5" width="8" height="10" fill="#f4f4f4" stroke="#8a8a8a"/><path d="M9.5 1v9M11.5 1v9" stroke="#6b8aaa" stroke-width="1"/><path d="M8.5 12.5h5" stroke="#888"/></svg><div class="t" style="left:118px;top:432.1px;line-height:18px;font-size:14.6px;color:#000;">Multiple Domains</div><svg style="position:absolute;left:19px;top:459.6px" width="10" height="6"><path d="M0.5 0.5h9l-4.5 4.5z" fill="#444"/></svg><svg style="position:absolute;left:41px;top:454px" width="16" height="17" viewBox="0 0 16 17"><rect x="0.5" y="0.5" width="15" height="16" fill="#f8f8f8" stroke="#b0b0b0"/><path d="M3.5 8.5l3 4.5 6-10" fill="none" stroke="#111" stroke-width="2"/></svg><svg style="position:absolute;left:68px;top:454px" width="16" height="18" viewBox="0 0 16 18"><path d="M1 17h4M1 17v-4" stroke="#999" stroke-width="1"/><rect x="3.5" y="4.5" width="9" height="10" fill="none" stroke="#8a8a8a"/><rect x="6.5" y="2.5" width="8" height="10" fill="#f4f4f4" stroke="#8a8a8a"/><path d="M9.5 1v9M11.5 1v9" stroke="#6b8aaa" stroke-width="1"/><path d="M8.5 12.5h5" stroke="#888"/></svg><div class="t" style="left:93px;top:454.6px;line-height:18px;font-size:14.6px;color:#000;">Schematic Layers</div><svg style="position:absolute;left:66px;top:477px" width="16" height="17" viewBox="0 0 16 17"><rect x="0.5" y="0.5" width="15" height="16" fill="#f8f8f8" stroke="#b0b0b0"/><path d="M3.5 8.5l3 4.5 6-10" fill="none" stroke="#111" stroke-width="2"/></svg><div style="position:absolute;left:93px;top:476px;width:18px;height:18px;box-sizing:border-box;background:#f6f6f6;border:1px solid #c4c4c4"></div><div class="t" style="left:118px;top:477.1px;line-height:18px;font-size:14.4px;font-weight:bold;color:#000;">Grid</div><svg style="position:absolute;left:46px;top:502.55999999999995px" width="6" height="10"><path d="M0.5 0.5v9l4.5-4.5z" fill="#444"/></svg><svg style="position:absolute;left:66px;top:499px" width="16" height="17" viewBox="0 0 16 17"><rect x="0.5" y="0.5" width="15" height="16" fill="#f8f8f8" stroke="#b0b0b0"/><path d="M3.5 8.5l3 4.5 6-10" fill="none" stroke="#111" stroke-width="2"/></svg><svg style="position:absolute;left:93px;top:499px" width="16" height="18" viewBox="0 0 16 18"><path d="M1 17h4M1 17v-4" stroke="#999" stroke-width="1"/><rect x="3.5" y="4.5" width="9" height="10" fill="none" stroke="#8a8a8a"/><rect x="6.5" y="2.5" width="8" height="10" fill="#f4f4f4" stroke="#8a8a8a"/><path d="M9.5 1v9M11.5 1v9" stroke="#6b8aaa" stroke-width="1"/><path d="M8.5 12.5h5" stroke="#888"/></svg><div class="t" style="left:118px;top:499.6px;line-height:18px;font-size:14.6px;color:#000;">Channels</div><svg style="position:absolute;left:46px;top:525.04px" width="6" height="10"><path d="M0.5 0.5v9l4.5-4.5z" fill="#444"/></svg><svg style="position:absolute;left:66px;top:522px" width="16" height="17" viewBox="0 0 16 17"><rect x="0.5" y="0.5" width="15" height="16" fill="#f8f8f8" stroke="#b0b0b0"/><path d="M3.5 8.5l3 4.5 6-10" fill="none" stroke="#111" stroke-width="2"/></svg><svg style="position:absolute;left:93px;top:521px" width="16" height="18" viewBox="0 0 16 18"><path d="M1 17h4M1 17v-4" stroke="#999" stroke-width="1"/><rect x="3.5" y="4.5" width="9" height="10" fill="none" stroke="#8a8a8a"/><rect x="6.5" y="2.5" width="8" height="10" fill="#f4f4f4" stroke="#8a8a8a"/><path d="M9.5 1v9M11.5 1v9" stroke="#6b8aaa" stroke-width="1"/><path d="M8.5 12.5h5" stroke="#888"/></svg><div class="t" style="left:118px;top:522.0px;line-height:18px;font-size:14.6px;color:#000;">Floodplain</div><svg style="position:absolute;left:46px;top:547.52px" width="6" height="10"><path d="M0.5 0.5v9l4.5-4.5z" fill="#444"/></svg><svg style="position:absolute;left:66px;top:544px" width="16" height="17" viewBox="0 0 16 17"><rect x="0.5" y="0.5" width="15" height="16" fill="#f8f8f8" stroke="#b0b0b0"/><path d="M3.5 8.5l3 4.5 6-10" fill="none" stroke="#111" stroke-width="2"/></svg><svg style="position:absolute;left:93px;top:544px" width="16" height="18" viewBox="0 0 16 18"><path d="M1 17h4M1 17v-4" stroke="#999" stroke-width="1"/><rect x="3.5" y="4.5" width="9" height="10" fill="none" stroke="#8a8a8a"/><rect x="6.5" y="2.5" width="8" height="10" fill="#f4f4f4" stroke="#8a8a8a"/><path d="M9.5 1v9M11.5 1v9" stroke="#6b8aaa" stroke-width="1"/><path d="M8.5 12.5h5" stroke="#888"/></svg><div class="t" style="left:118px;top:544.5px;line-height:18px;font-size:14.6px;color:#000;">Levees</div><svg style="position:absolute;left:46px;top:570.0px" width="6" height="10"><path d="M0.5 0.5v9l4.5-4.5z" fill="#444"/></svg><svg style="position:absolute;left:66px;top:566px" width="16" height="17" viewBox="0 0 16 17"><rect x="0.5" y="0.5" width="15" height="16" fill="#f8f8f8" stroke="#b0b0b0"/><path d="M3.5 8.5l3 4.5 6-10" fill="none" stroke="#111" stroke-width="2"/></svg><svg style="position:absolute;left:93px;top:566px" width="16" height="18" viewBox="0 0 16 18"><path d="M1 17h4M1 17v-4" stroke="#999" stroke-width="1"/><rect x="3.5" y="4.5" width="9" height="10" fill="none" stroke="#8a8a8a"/><rect x="6.5" y="2.5" width="8" height="10" fill="#f4f4f4" stroke="#8a8a8a"/><path d="M9.5 1v9M11.5 1v9" stroke="#6b8aaa" stroke-width="1"/><path d="M8.5 12.5h5" stroke="#888"/></svg><div class="t" style="left:118px;top:567.0px;line-height:18px;font-size:14.6px;color:#000;">Hydraulic Structures</div><svg style="position:absolute;left:46px;top:592.48px" width="6" height="10"><path d="M0.5 0.5v9l4.5-4.5z" fill="#444"/></svg><svg style="position:absolute;left:66px;top:589px" width="16" height="17" viewBox="0 0 16 17"><rect x="0.5" y="0.5" width="15" height="16" fill="#f8f8f8" stroke="#b0b0b0"/><path d="M3.5 8.5l3 4.5 6-10" fill="none" stroke="#111" stroke-width="2"/></svg><svg style="position:absolute;left:93px;top:588px" width="16" height="18" viewBox="0 0 16 18"><path d="M1 17h4M1 17v-4" stroke="#999" stroke-width="1"/><rect x="3.5" y="4.5" width="9" height="10" fill="none" stroke="#8a8a8a"/><rect x="6.5" y="2.5" width="8" height="10" fill="#f4f4f4" stroke="#8a8a8a"/><path d="M9.5 1v9M11.5 1v9" stroke="#6b8aaa" stroke-width="1"/><path d="M8.5 12.5h5" stroke="#888"/></svg><div class="t" style="left:118px;top:589.5px;line-height:18px;font-size:14.6px;color:#000;">Boundary Conditions</div><svg style="position:absolute;left:46px;top:614.96px" width="6" height="10"><path d="M0.5 0.5v9l4.5-4.5z" fill="#444"/></svg><svg style="position:absolute;left:66px;top:611px" width="16" height="17" viewBox="0 0 16 17"><rect x="0.5" y="0.5" width="15" height="16" fill="#f8f8f8" stroke="#b0b0b0"/><path d="M3.5 8.5l3 4.5 6-10" fill="none" stroke="#111" stroke-width="2"/></svg><svg style="position:absolute;left:93px;top:611px" width="16" height="18" viewBox="0 0 16 18"><path d="M1 17h4M1 17v-4" stroke="#999" stroke-width="1"/><rect x="3.5" y="4.5" width="9" height="10" fill="none" stroke="#8a8a8a"/><rect x="6.5" y="2.5" width="8" height="10" fill="#f4f4f4" stroke="#8a8a8a"/><path d="M9.5 1v9M11.5 1v9" stroke="#6b8aaa" stroke-width="1"/><path d="M8.5 12.5h5" stroke="#888"/></svg><div class="t" style="left:118px;top:612.0px;line-height:18px;font-size:14.6px;color:#000;">Areas</div><svg style="position:absolute;left:46px;top:637.44px" width="6" height="10"><path d="M0.5 0.5v9l4.5-4.5z" fill="#444"/></svg><svg style="position:absolute;left:66px;top:634px" width="16" height="17" viewBox="0 0 16 17"><rect x="0.5" y="0.5" width="15" height="16" fill="#f8f8f8" stroke="#b0b0b0"/><path d="M3.5 8.5l3 4.5 6-10" fill="none" stroke="#111" stroke-width="2"/></svg><svg style="position:absolute;left:93px;top:633px" width="16" height="18" viewBox="0 0 16 18"><path d="M1 17h4M1 17v-4" stroke="#999" stroke-width="1"/><rect x="3.5" y="4.5" width="9" height="10" fill="none" stroke="#8a8a8a"/><rect x="6.5" y="2.5" width="8" height="10" fill="#f4f4f4" stroke="#8a8a8a"/><path d="M9.5 1v9M11.5 1v9" stroke="#6b8aaa" stroke-width="1"/><path d="M8.5 12.5h5" stroke="#888"/></svg><div class="t" style="left:118px;top:634.4px;line-height:18px;font-size:14.6px;color:#000;">Multiple Domains</div><svg style="position:absolute;left:46px;top:659.92px" width="6" height="10"><path d="M0.5 0.5v9l4.5-4.5z" fill="#444"/></svg><svg style="position:absolute;left:66px;top:656px" width="16" height="17" viewBox="0 0 16 17"><rect x="0.5" y="0.5" width="15" height="16" fill="#f8f8f8" stroke="#b0b0b0"/><path d="M3.5 8.5l3 4.5 6-10" fill="none" stroke="#111" stroke-width="2"/></svg><svg style="position:absolute;left:93px;top:656px" width="16" height="18" viewBox="0 0 16 18"><path d="M1 17h4M1 17v-4" stroke="#999" stroke-width="1"/><rect x="3.5" y="4.5" width="9" height="10" fill="none" stroke="#8a8a8a"/><rect x="6.5" y="2.5" width="8" height="10" fill="#f4f4f4" stroke="#8a8a8a"/><path d="M9.5 1v9M11.5 1v9" stroke="#6b8aaa" stroke-width="1"/><path d="M8.5 12.5h5" stroke="#888"/></svg><div class="t" style="left:118px;top:656.9px;line-height:18px;font-size:14.6px;color:#000;">Storm Drain</div><svg style="position:absolute;left:21px;top:682.4px" width="6" height="10"><path d="M0.5 0.5v9l4.5-4.5z" fill="#444"/></svg><svg style="position:absolute;left:41px;top:679px" width="16" height="17" viewBox="0 0 16 17"><rect x="0.5" y="0.5" width="15" height="16" fill="#f8f8f8" stroke="#b0b0b0"/><path d="M3.5 8.5l3 4.5 6-10" fill="none" stroke="#111" stroke-width="2"/></svg><svg style="position:absolute;left:68px;top:678px" width="16" height="18" viewBox="0 0 16 18"><path d="M1 17h4M1 17v-4" stroke="#999" stroke-width="1"/><rect x="3.5" y="4.5" width="9" height="10" fill="none" stroke="#8a8a8a"/><rect x="6.5" y="2.5" width="8" height="10" fill="#f4f4f4" stroke="#8a8a8a"/><path d="M9.5 1v9M11.5 1v9" stroke="#6b8aaa" stroke-width="1"/><path d="M8.5 12.5h5" stroke="#888"/></svg><div class="t" style="left:93px;top:679.4px;line-height:18px;font-size:14.6px;color:#000;">External Layers</div><svg style="position:absolute;left:16px;top:701px" width="16" height="17" viewBox="0 0 16 17"><rect x="0.5" y="0.5" width="15" height="16" fill="#f8f8f8" stroke="#b0b0b0"/><path d="M3.5 8.5l3 4.5 6-10" fill="none" stroke="#111" stroke-width="2"/></svg><svg style="position:absolute;left:43px;top:702px" width="16" height="16"><rect x="0" y="0" width="5" height="5" fill="#1a3050"/><rect x="10" y="0" width="5" height="5" fill="#1a3050"/><rect x="5" y="5" width="5" height="5" fill="#1a3050"/><rect x="0" y="10" width="5" height="5" fill="#1a3050"/><rect x="5" y="0" width="5" height="5" fill="#8ab0d8"/><rect x="0" y="5" width="5" height="5" fill="#8ab0d8"/><rect x="10" y="5" width="5" height="5" fill="#8ab0d8"/><rect x="5" y="10" width="5" height="5" fill="#8ab0d8"/><rect x="10" y="10" width="5" height="5" fill="#cfe0f0"/></svg><div class="t" style="left:68px;top:701.9px;line-height:18px;font-size:14.4px;font-weight:bold;color:#000;">Google Satellite</div></div><div style="position:absolute;left:0px;top:965px;width:53px;height:32px;box-sizing:border-box;background:#f4f4f4;border-right:1px solid #c4c4c4;border-bottom:1px solid #c4c4c4;border-radius:0 0 3px 0"></div><div class="t" style="left:0px;top:974.0px;line-height:16px;font-size:12.8px;color:#111;">Layers</div><div style="position:absolute;left:53px;top:968px;width:72px;height:25px;box-sizing:border-box;background:#d9d9d9;border:1px solid #c0c0c0;border-top:none;border-radius:0 0 3px 3px"></div><div class="t" style="left:66px;top:973.0px;line-height:16px;font-size:12.8px;color:#111;">Browser</div><div style="position:absolute;left:281px;top:150px;width:2px;height:815px;background:#f4f4f4"></div><div class="t" style="left:294px;top:157.0px;line-height:18px;font-size:14.5px;color:#111;">FLO-2D Grid Info</div><svg style="position:absolute;left:1370px;top:158px" width="32" height="14" viewBox="0 0 32 14"><rect x="0.5" y="0.5" width="12" height="12" rx="2" fill="none" stroke="#777"/><rect x="3.5" y="5.5" width="5" height="5" fill="none" stroke="#666"/><rect x="5.5" y="3" width="5" height="5" fill="none" stroke="#666"/><rect x="17.5" y="0.5" width="12" height="12" rx="2" fill="none" stroke="#777"/><path d="M20.5 3.5l6 6M26.5 3.5l-6 6" stroke="#444" stroke-width="2"/></svg><div class="t" style="left:296px;top:192.0px;line-height:16px;font-size:12.5px;color:#111;">ID</div><div class="inp" style="left:318px;top:185px;width:124px;height:27px"></div><div class="inp" style="left:450px;top:184px;width:35px;height:30px;border-color:#b8b8b8"></div><svg style="position:absolute;left:458px;top:193px" width="20" height="12" viewBox="0 0 24 14"><path d="M1 7c5-8 17-8 22 0-5 8-17 8-22 0z" fill="none" stroke="#111" stroke-width="2.2"/><circle cx="12" cy="7" r="3.6" fill="none" stroke="#111" stroke-width="2.2"/></svg><div class="t" style="left:493px;top:192.0px;line-height:16px;font-size:12.5px;color:#111;">Elev</div><div class="inp" style="left:524px;top:185px;width:124px;height:27px"></div><div class="t" style="left:656px;top:192.0px;line-height:16px;font-size:12.5px;color:#111;">n</div><div class="inp" style="left:672px;top:185px;width:124px;height:27px"></div><div class="t" style="left:998px;top:192.0px;line-height:16px;font-size:12.5px;color:#111;">Cell size</div><div class="inp" style="left:1049px;top:186px;width:63px;height:26px"></div><div class="t" style="left:1120px;top:192.0px;line-height:16px;font-size:12.5px;color:#111;">Number of cells: 0</div><div class="t" style="left:1241px;top:192.0px;line-height:16px;font-size:12.5px;color:#111;">Render:</div><div class="inp" style="left:1293px;top:186px;width:104px;height:26px"></div><svg style="position:absolute;left:1377px;top:195px" width="10" height="6" viewBox="0 0 10 6"><path d="M0.5 0.5h9l-4.5 5z" fill="#444"/></svg><div style="position:absolute;left:280px;top:215px;width:1px;height:750px;background:#c9c9c9"></div><div class="t" style="left:294px;top:805.0px;line-height:18px;font-size:14.5px;color:#111;">FLO-2D Table Editor</div><svg style="position:absolute;left:946px;top:806px" width="32" height="14" viewBox="0 0 32 14"><rect x="0.5" y="0.5" width="12" height="12" rx="2" fill="none" stroke="#777"/><rect x="3.5" y="5.5" width="5" height="5" fill="none" stroke="#666"/><rect x="5.5" y="3" width="5" height="5" fill="none" stroke="#666"/><rect x="17.5" y="0.5" width="12" height="12" rx="2" fill="none" stroke="#777"/><path d="M20.5 3.5l6 6M26.5 3.5l-6 6" stroke="#444" stroke-width="2"/></svg><div class="btn" style="left:296px;top:833px;width:75px;height:25px;line-height:23px">Copy</div><div class="btn" style="left:296px;top:865px;width:75px;height:25px;line-height:23px">Paste</div><div class="btn" style="left:296px;top:898px;width:75px;height:25px;line-height:23px">Delete</div><div class="btn" style="left:296px;top:931px;width:75px;height:25px;line-height:23px">Undo</div><div class="btn" style="left:296px;top:963px;width:75px;height:25px;line-height:23px">Redo</div><div style="position:absolute;left:970px;top:833px;width:1px;height:156px;background:#aaa"></div><svg style="position:absolute;left:1370px;top:806px" width="32" height="14" viewBox="0 0 32 14"><rect x="0.5" y="0.5" width="12" height="12" rx="2" fill="none" stroke="#777"/><rect x="3.5" y="5.5" width="5" height="5" fill="none" stroke="#666"/><rect x="5.5" y="3" width="5" height="5" fill="none" stroke="#666"/><rect x="17.5" y="0.5" width="12" height="12" rx="2" fill="none" stroke="#777"/><path d="M20.5 3.5l6 6M26.5 3.5l-6 6" stroke="#444" stroke-width="2"/></svg><svg style="position:absolute;left:962px;top:806px" width="14" height="14" viewBox="0 0 14 14"><rect x="0.5" y="0.5" width="12" height="12" rx="2" fill="none" stroke="#777"/><path d="M3.5 3.5l6 6M9.5 3.5l-6 6" stroke="#444" stroke-width="2"/></svg><div class="t" style="left:993px;top:805.0px;line-height:18px;font-size:14.5px;color:#111;">FLO-2D Plot</div><div style="position:absolute;left:971px;top:833px;width:1px;height:156px;background:#b0b0b0"></div><svg style="position:absolute;left:1033px;top:836px;" width="360" height="92" viewBox="0 0 360 92"><path d="M20.0 0V90" stroke="#8a8a8a" stroke-width="1" stroke-dasharray="2 1"/><path d="M52.0 0V90" stroke="#d0d0d0" stroke-width="1" stroke-dasharray="1 3"/><path d="M84.0 0V90" stroke="#8a8a8a" stroke-width="1" stroke-dasharray="2 1"/><path d="M116.0 0V90" stroke="#d0d0d0" stroke-width="1" stroke-dasharray="1 3"/><path d="M148.0 0V90" stroke="#8a8a8a" stroke-width="1" stroke-dasharray="2 1"/><path d="M180.0 0V90" stroke="#d0d0d0" stroke-width="1" stroke-dasharray="1 3"/><path d="M212.0 0V90" stroke="#8a8a8a" stroke-width="1" stroke-dasharray="2 1"/><path d="M244.0 0V90" stroke="#d0d0d0" stroke-width="1" stroke-dasharray="1 3"/><path d="M276.0 0V90" stroke="#8a8a8a" stroke-width="1" stroke-dasharray="2 1"/><path d="M308.0 0V90" stroke="#d0d0d0" stroke-width="1" stroke-dasharray="1 3"/><path d="M340.0 0V90" stroke="#8a8a8a" stroke-width="1" stroke-dasharray="2 1"/><path d="M0 80.5H360" stroke="#cdcdcd" stroke-width="1"/><path d="M0 48.700000000000045H360" stroke="#cdcdcd" stroke-width="1"/><path d="M0 16.899999999999977H360" stroke="#cdcdcd" stroke-width="1"/><path d="M0 64.60000000000002H360" stroke="#d0d0d0" stroke-width="1" stroke-dasharray="1 5"/><path d="M0 32.799999999999955H360" stroke="#d0d0d0" stroke-width="1" stroke-dasharray="1 5"/><path d="M1 0V91H360" fill="none" stroke="#111" stroke-width="1.3"/></svg><div class="t" style="left:980px;width:47px;text-align:right;top:846.4px;line-height:16px;font-size:12.5px;color:#111">400</div><div class="t" style="left:980px;width:47px;text-align:right;top:878.2px;line-height:16px;font-size:12.5px;color:#111">200</div><div class="t" style="left:980px;width:47px;text-align:right;top:910.0px;line-height:16px;font-size:12.5px;color:#111">0</div><div class="t" style="left:1032.5px;width:40px;text-align:center;top:929px;line-height:16px;font-size:12.5px;color:#111">0</div><div class="t" style="left:1096.5px;width:40px;text-align:center;top:929px;line-height:16px;font-size:12.5px;color:#111">2</div><div class="t" style="left:1160.5px;width:40px;text-align:center;top:929px;line-height:16px;font-size:12.5px;color:#111">4</div><div class="t" style="left:1224.5px;width:40px;text-align:center;top:929px;line-height:16px;font-size:12.5px;color:#111">6</div><div class="t" style="left:1288.5px;width:40px;text-align:center;top:929px;line-height:16px;font-size:12.5px;color:#111">8</div><div class="t" style="left:1352.5px;width:40px;text-align:center;top:929px;line-height:16px;font-size:12.5px;color:#111">10</div><div class="btn" style="left:1293px;top:959px;width:100px;height:26px;line-height:24px">Auto Range</div><div style="position:absolute;left:0px;top:1003px;width:1890px;height:1px;background:#9a9a9a"></div><div style="position:absolute;left:0px;top:1000px;width:240px;height:3px;box-sizing:border-box;border:1px solid #c4c4c4;border-bottom:none;border-radius:2px 2px 0 0;background:#f0f0f0"></div><div style="position:absolute;left:995px;top:1000px;width:117px;height:3px;box-sizing:border-box;border:1px solid #c4c4c4;border-bottom:none;border-radius:2px 2px 0 0;background:#f0f0f0"></div><div style="position:absolute;left:1190px;top:1000px;width:70px;height:3px;box-sizing:border-box;border:1px solid #c4c4c4;border-bottom:none;border-radius:2px 2px 0 0;background:#f0f0f0"></div><div style="position:absolute;left:1260px;top:1000px;width:25px;height:3px;box-sizing:border-box;border:1px solid #c4c4c4;border-bottom:none;border-radius:2px 2px 0 0;background:#f0f0f0"></div><div style="position:absolute;left:1387px;top:1000px;width:83px;height:3px;box-sizing:border-box;border:1px solid #c4c4c4;border-bottom:none;border-radius:2px 2px 0 0;background:#f0f0f0"></div><div style="position:absolute;left:1470px;top:1000px;width:17px;height:3px;box-sizing:border-box;border:1px solid #c4c4c4;border-bottom:none;border-radius:2px 2px 0 0;background:#f0f0f0"></div><div style="position:absolute;left:1562px;top:1000px;width:83px;height:3px;box-sizing:border-box;border:1px solid #c4c4c4;border-bottom:none;border-radius:2px 2px 0 0;background:#f0f0f0"></div><div style="position:absolute;left:1645px;top:1000px;width:17px;height:3px;box-sizing:border-box;border:1px solid #c4c4c4;border-bottom:none;border-radius:2px 2px 0 0;background:#f0f0f0"></div><div style="position:absolute;left:1403px;top:150px;width:1px;height:815px;background:#f4f4f4"></div><div class="t" style="left:1416px;top:157.0px;line-height:18px;font-size:14.5px;color:#111;">FLO-2D</div><svg style="position:absolute;left:1871px;top:158px" width="19" height="14"><rect x="0.5" y="0.5" width="12" height="12" rx="2" fill="none" stroke="#777"/><rect x="3.5" y="5.5" width="5" height="5" fill="none" stroke="#666"/><rect x="5.5" y="3" width="5" height="5" fill="none" stroke="#666"/><rect x="17.5" y="0.5" width="12" height="12" rx="2" fill="none" stroke="#777"/></svg><div style="position:absolute;left:1426px;top:191px;width:30px;height:29px;box-sizing:border-box;border:1px solid #b8b8b8;border-radius:3px;background:#f6f6f6"></div><svg style="position:absolute;left:1426px;top:191px" width="30" height="29" viewBox="0 0 30 29"><rect x="7" y="12" width="4" height="3" fill="#555"/><rect x="7" y="19" width="4" height="3" fill="#555"/><path d="M7 8h10" stroke="#555" stroke-width="1.3"/><path d="M17 24V13h-4l6-7 6 7h-4v11z" fill="#5b8bc9" stroke="#3e6aa0"/></svg><div style="position:absolute;left:1464px;top:191px;width:30px;height:29px;box-sizing:border-box;border:1px solid #b8b8b8;border-radius:3px;background:#f6f6f6"></div><svg style="position:absolute;left:1464px;top:191px" width="30" height="29" viewBox="0 0 30 29"><rect x="6" y="7" width="18" height="16" fill="#e8f0fa" stroke="#7aa0cc"/><rect x="7" y="8" width="16" height="3" fill="#9bbbe0"/><path d="M7 14h16M7 17h16M7 20h16M13 11v12" stroke="#7aa0cc"/></svg><div style="position:absolute;left:1501px;top:191px;width:30px;height:29px;box-sizing:border-box;border:1px solid #b8b8b8;border-radius:3px;background:#f6f6f6"></div><svg style="position:absolute;left:1501px;top:191px" width="30" height="29" viewBox="0 0 30 29"><rect x="6" y="6" width="18" height="18" fill="none" stroke="#aaa"/><path d="M16 6v18M6 15h18" stroke="#ccc"/><path d="M7 24V13c2-5 8-7 16-7" fill="none" stroke="#6a9a6a" stroke-width="1.3"/><path d="M6 6v18h18" fill="none" stroke="#333" stroke-width="1.3"/></svg><div style="position:absolute;left:1539px;top:191px;width:30px;height:29px;box-sizing:border-box;border:1px solid #b8b8b8;border-radius:3px;background:#f6f6f6"></div><svg style="position:absolute;left:1539px;top:191px" width="30" height="29" viewBox="0 0 30 29"><path d="M7 5l7 8" stroke="#d05a1a" stroke-width="2.5"/><path d="M12 12l6-3 6 10-6 4z" fill="#f0a040" stroke="#555"/><path d="M16 14l3 6M19 12l3 6" stroke="#555" stroke-width="0.8"/></svg><svg style="position:absolute;left:1429px;top:231px" width="10" height="12"><path d="M1.5 1.5v9l7-4.5z" fill="#3a3a3a" stroke="#222" stroke-width="0.8"/></svg><div class="t" style="left:1451px;top:230.0px;line-height:16px;font-size:12.9px;font-weight:bold;color:#000;">Grid Tools</div><svg style="position:absolute;left:1429px;top:254px" width="10" height="12"><path d="M1.5 1.5v9l7-4.5z" fill="#3a3a3a" stroke="#222" stroke-width="0.8"/></svg><div class="t" style="left:1451px;top:253.0px;line-height:16px;font-size:12.9px;font-weight:bold;color:#000;">Pre-processing Tools</div><svg style="position:absolute;left:1429px;top:276px" width="10" height="12"><path d="M1.5 1.5v9l7-4.5z" fill="#3a3a3a" stroke="#222" stroke-width="0.8"/></svg><div class="t" style="left:1451px;top:275.0px;line-height:16px;font-size:12.9px;font-weight:bold;color:#000;">Profile Tool</div><svg style="position:absolute;left:1429px;top:299px" width="10" height="12"><path d="M1.5 1.5v9l7-4.5z" fill="#3a3a3a" stroke="#222" stroke-width="0.8"/></svg><div class="t" style="left:1451px;top:298.0px;line-height:16px;font-size:12.9px;font-weight:bold;color:#000;">Cross Sections Editor</div><svg style="position:absolute;left:1429px;top:321px" width="10" height="12"><path d="M1.5 1.5v9l7-4.5z" fill="#3a3a3a" stroke="#222" stroke-width="0.8"/></svg><div class="t" style="left:1451px;top:320.0px;line-height:16px;font-size:12.9px;font-weight:bold;color:#000;">Boundary Condition Editor</div><svg style="position:absolute;left:1429px;top:344px" width="10" height="12"><path d="M1.5 1.5v9l7-4.5z" fill="#3a3a3a" stroke="#222" stroke-width="0.8"/></svg><div class="t" style="left:1451px;top:343.0px;line-height:16px;font-size:12.9px;font-weight:bold;color:#000;">Initial Condition Editor</div><svg style="position:absolute;left:1429px;top:366px" width="10" height="12"><path d="M1.5 1.5v9l7-4.5z" fill="#3a3a3a" stroke="#222" stroke-width="0.8"/></svg><div class="t" style="left:1451px;top:365.0px;line-height:16px;font-size:12.9px;font-weight:bold;color:#000;">Rain Editor</div><svg style="position:absolute;left:1429px;top:389px" width="10" height="12"><path d="M1.5 1.5v9l7-4.5z" fill="#3a3a3a" stroke="#222" stroke-width="0.8"/></svg><div class="t" style="left:1451px;top:388.0px;line-height:16px;font-size:12.9px;font-weight:bold;color:#000;">Areas Editor</div><svg style="position:absolute;left:1429px;top:411px" width="10" height="12"><path d="M1.5 1.5v9l7-4.5z" fill="#3a3a3a" stroke="#222" stroke-width="0.8"/></svg><div class="t" style="left:1451px;top:410.0px;line-height:16px;font-size:12.9px;font-weight:bold;color:#000;">Schematized Channels Editor</div><svg style="position:absolute;left:1427px;top:435px" width="12" height="10"><path d="M1 1.5h10l-5 7z" fill="#3a3a3a" stroke="#222" stroke-width="0.8"/></svg><div class="t" style="left:1451px;top:433.0px;line-height:16px;font-size:12.9px;font-weight:bold;color:#000;">Structures Editor</div><div style="position:absolute;left:1425px;top:453px;width:449px;height:460px;box-sizing:border-box;border:1px solid #cdcdcd;border-radius:3px"></div><div style="position:absolute;left:1446px;top:471px;width:40px;height:39px;box-sizing:border-box;border:1px solid #b8b8b8;border-radius:3px;background:#f6f6f6"></div><svg style="position:absolute;left:1446px;top:471px" width="40" height="39" viewBox="0 0 40 39"><path d="M8 10l7 12 6-10" fill="none" stroke="#7aaa7a" stroke-width="1.6"/><rect x="18" y="7" width="5" height="4" fill="#999"/><rect x="26" y="7" width="5" height="4" fill="#999"/><path d="M23 9h3" stroke="#999"/><rect x="20" y="19" width="11" height="11" rx="1.5" fill="#c9a227"/><path d="M25.5 20.5v8M21.5 24.5h8M22 21l7 7M29 21l-7 7" stroke="#fff" stroke-width="1.2"/></svg><div style="position:absolute;left:1494px;top:471px;width:40px;height:39px;box-sizing:border-box;border:1px solid #b8b8b8;border-radius:3px;background:#f6f6f6"></div><svg style="position:absolute;left:1494px;top:471px" width="40" height="39" viewBox="0 0 40 39"><rect x="6" y="7" width="24" height="24" rx="3" fill="#5b86c0" stroke="#3e5a80"/><rect x="11" y="8" width="15" height="9" fill="#eef"/><rect x="11" y="22" width="13" height="8" fill="#fff"/><path d="M22 33l3-8 7-9 3 2-7 9z" fill="#e07a30" stroke="#555"/></svg><div style="position:absolute;left:1541px;top:471px;width:40px;height:39px;box-sizing:border-box;border:1px solid #b8b8b8;border-radius:3px;background:#f6f6f6"></div><svg style="position:absolute;left:1541px;top:471px" width="40" height="39" viewBox="0 0 40 39"><path d="M30 30c2-10-4-15-13-14v-5l-8 8 8 8v-5c6 0 10 2 13 8z" fill="#e8843a"/></svg><div style="position:absolute;left:1588px;top:471px;width:40px;height:39px;box-sizing:border-box;border:1px solid #b8b8b8;border-radius:3px;background:#f6f6f6"></div><svg style="position:absolute;left:1588px;top:471px" width="40" height="39" viewBox="0 0 40 39"><rect x="11" y="13" width="18" height="18" rx="2" fill="none" stroke="#d01818" stroke-width="3"/><path d="M8 10h24M16 8h8" stroke="#d01818" stroke-width="3"/><path d="M16 16v12M20 16v12M24 16v12" stroke="#d01818" stroke-width="2.5"/></svg><div style="position:absolute;left:1764px;top:471px;width:40px;height:39px;box-sizing:border-box;border:1px solid #b8b8b8;border-radius:3px;background:#f6f6f6"></div><svg style="position:absolute;left:1764px;top:471px" width="40" height="39" viewBox="0 0 40 39"><path d="M6 5v29M12 5v29M18 5v29M24 5v29M30 5v29M35 5v29M3 9h32M3 15h32M3 21h32M3 27h32M3 33h32" stroke="#222" stroke-width="0.7"/><path d="M7 20l15-10 5-5" stroke="#1a4ad0" stroke-width="3"/><path d="M9 22l18 9" stroke="#1a4ad0" stroke-width="3"/><circle cx="9" cy="22" r="2" fill="#fff" stroke="#111"/><circle cx="27" cy="31" r="2" fill="#fff" stroke="#111"/><circle cx="22" cy="12" r="2" fill="#fff" stroke="#111"/><circle cx="27" cy="7" r="2" fill="#fff" stroke="#111"/></svg><div style="position:absolute;left:1812px;top:471px;width:40px;height:39px;box-sizing:border-box;border:1px solid #b8b8b8;border-radius:3px;background:#f6f6f6"></div><svg style="position:absolute;left:1812px;top:471px" width="40" height="39" viewBox="0 0 40 39"><rect x="7" y="5" width="26" height="28" fill="#5b86c0"/><rect x="7" y="5" width="6" height="28" fill="#2b3440"/><text x="18" y="26" font-size="17" font-family="Liberation Serif" fill="#dde">?</text></svg><div class="t" style="left:1446px;top:526.0px;line-height:16px;font-size:12.5px;color:#111;">Structure</div><div class="inp" style="left:1554px;top:518px;width:223px;height:31px"></div><svg style="position:absolute;left:1757px;top:530px" width="10" height="6" viewBox="0 0 10 6"><path d="M0.5 0.5h9l-4.5 5z" fill="#555"/></svg><div style="position:absolute;left:1783px;top:518px;width:31px;height:29px;box-sizing:border-box;border:1px solid #b8b8b8;border-radius:3px;background:#f6f6f6"></div><svg style="position:absolute;left:1783px;top:518px" width="31" height="29" viewBox="0 0 31 29"><text x="6" y="19" font-size="16" font-family="Liberation Sans" fill="#111">A</text><path d="M17 24l2-6 5-6 2 1-5 7z" fill="#e07a30"/></svg><div style="position:absolute;left:1821px;top:518px;width:31px;height:29px;box-sizing:border-box;border:1px solid #b8b8b8;border-radius:3px;background:#f6f6f6"></div><svg style="position:absolute;left:1821px;top:518px" width="31" height="29" viewBox="0 0 31 29"></svg><svg style="position:absolute;left:1827px;top:527px" width="20" height="12" viewBox="0 0 24 14"><path d="M1 7c5-8 17-8 22 0-5 8-17 8-22 0z" fill="none" stroke="#111" stroke-width="2.2"/><circle cx="12" cy="7" r="3.6" fill="none" stroke="#111" stroke-width="2.2"/></svg><div class="t" style="left:1446px;top:563.0px;line-height:16px;font-size:12.5px;color:#111;">Type</div><div class="inp" style="left:1554px;top:556px;width:223px;height:28px"></div><div class="t" style="left:1560px;top:563.0px;line-height:16px;font-size:12.5px;color:#111;">Floodplain</div><svg style="position:absolute;left:1757px;top:566px" width="10" height="6" viewBox="0 0 10 6"><path d="M0.5 0.5h9l-4.5 5z" fill="#555"/></svg><div class="t" style="left:1448px;top:594.0px;line-height:16px;font-size:13px;font-weight:bold;color:#000;">Rating</div><div style="position:absolute;left:1448px;top:614px;width:404px;height:101px;box-sizing:border-box;border:1px solid #cdcdcd;border-radius:3px"></div><div class="inp" style="left:1461px;top:633px;width:162px;height:25px"></div><div class="t" style="left:1467px;top:639.0px;line-height:16px;font-size:12.5px;color:#111;">Rating curve</div><svg style="position:absolute;left:1603px;top:643px" width="10" height="6" viewBox="0 0 10 6"><path d="M0.5 0.5h9l-4.5 5z" fill="#555"/></svg><div class="btn" style="left:1694px;top:666px;width:143px;height:25px;line-height:23px">Import Rating Tables ...</div><div class="t" style="left:1446px;top:730.0px;line-height:16px;font-size:12.5px;color:#111;">Tail water</div><div class="inp" style="left:1579px;top:724px;width:273px;height:27px"></div><div class="t" style="left:1585px;top:729px;width:236px;overflow:hidden;line-height:16px;font-size:12.5px;color:#111">No tail water effect - discharge based on headwater</div><svg style="position:absolute;left:1832px;top:734px" width="10" height="6" viewBox="0 0 10 6"><path d="M0.5 0.5h9l-4.5 5z" fill="#555"/></svg><div style="position:absolute;left:1446px;top:763px;width:18px;height:18px;box-sizing:border-box;border:1px solid #b8b8b8;background:#f8f8f8"></div><div class="t" style="left:1470px;top:765.0px;line-height:16px;font-size:12.5px;color:#111;">Storm drain capacity</div><div class="inp" style="left:1753px;top:760px;width:100px;height:26px"></div><div class="inp" style="left:1753px;top:795px;width:100px;height:26px"></div><div class="t" style="left:1446px;top:800.0px;line-height:16px;font-size:12.5px;color:#111;">Reference elevation for headwater</div><div class="inp" style="left:1753px;top:830px;width:100px;height:26px"></div><div class="t" style="left:1446px;top:835.0px;line-height:16px;font-size:12.5px;color:#111;">Culvert or conduit length</div><div class="inp" style="left:1753px;top:865px;width:100px;height:26px"></div><div class="t" style="left:1446px;top:870.0px;line-height:16px;font-size:12.5px;color:#111;">Circular diameter or box culvert height</div><svg style="position:absolute;left:1429px;top:925px" width="10" height="12"><path d="M1.5 1.5v9l7-4.5z" fill="#3a3a3a" stroke="#222" stroke-width="0.8"/></svg><div class="t" style="left:1451px;top:924.0px;line-height:16px;font-size:12.9px;font-weight:bold;color:#000;">Street Editor</div><svg style="position:absolute;left:1429px;top:948px" width="10" height="12"><path d="M1.5 1.5v9l7-4.5z" fill="#3a3a3a" stroke="#222" stroke-width="0.8"/></svg><div class="t" style="left:1451px;top:947.0px;line-height:16px;font-size:12.9px;font-weight:bold;color:#000;">Floodplain Cross Sections Editor</div><svg style="position:absolute;left:1429px;top:970px" width="10" height="12"><path d="M1.5 1.5v9l7-4.5z" fill="#3a3a3a" stroke="#222" stroke-width="0.8"/></svg><div class="t" style="left:1451px;top:969.0px;line-height:16px;font-size:12.9px;font-weight:bold;color:#000;">Infiltration Editor</div><div style="position:absolute;left:1873px;top:187px;width:1px;height:798px;background:#d0d0d0"></div><div style="position:absolute;left:1874px;top:855px;width:16px;height:1px;background:#c8c8c8"></div><div style="position:absolute;left:1874px;top:965px;width:16px;height:1px;background:#c8c8c8"></div><svg style="position:absolute;left:1876px;top:194px" width="12" height="8"><path d="M1 7h10l-5-6z" fill="#444"/></svg><svg style="position:absolute;left:1876px;top:971px" width="12" height="8"><path d="M1 1h10l-5 6z" fill="#444"/></svg><div style="position:absolute;left:1874px;top:207px;width:16px;height:1px;background:#d8d8d8"></div><svg style="position:absolute;left:1445px;top:465px" width="14" height="21" viewBox="0 0 14 21"><path d="M0.5 0.5v16l4-4 3 7 2.5-1-3-7h5.5z" fill="#fff" stroke="#111" stroke-width="1"/></svg><svg style="position:absolute;left:290px;top:230px;overflow:hidden" width="1113" height="563" viewBox="0 0 1113 563"><defs><clipPath id="dom"><polygon points="0.0,0.0 1113.0,0.0 1113.0,478.0 703.0,450.0 550.0,393.0 450.0,357.0 180.0,224.0 0.0,221.0"/></clipPath><pattern id="grid" x="0.4" y="2.1" width="6.22" height="6.23" patternUnits="userSpaceOnUse"><path d="M0.5 0V6.23M0 0.5H6.22" stroke="#2c3e50" stroke-width="1" stroke-opacity="0.8" shape-rendering="crispEdges"/></pattern><filter id="spk" x="0" y="0" width="100%" height="100%" color-interpolation-filters="sRGB"><feTurbulence type="fractalNoise" baseFrequency="0.1 0.28" numOctaves="3" seed="3"/><feColorMatrix type="matrix" values="0 0 0 0 0.27  0 0 0 0 0.35  0 0 0 0 0.43  7 0 0 0 -4.1"/><feGaussianBlur stdDeviation="0.6"/></filter><filter id="spkl" x="0" y="0" width="100%" height="100%" color-interpolation-filters="sRGB"><feTurbulence type="fractalNoise" baseFrequency="0.07 0.2" numOctaves="3" seed="9"/><feColorMatrix type="matrix" values="0 0 0 0 0.80  0 0 0 0 0.86  0 0 0 0 0.93  6 0 0 0 -3.1"/><feGaussianBlur stdDeviation="0.4"/></filter><filter id="spkt" x="0" y="0" width="100%" height="100%" color-interpolation-filters="sRGB"><feTurbulence type="fractalNoise" baseFrequency="0.3" numOctaves="2" seed="31"/><feColorMatrix type="matrix" values="0 0 0 0 0.76  0 0 0 0 0.71  0 0 0 0 0.64  8 0 0 0 -4.9"/></filter><filter id="hf" x="0" y="0" width="100%" height="100%" color-interpolation-filters="sRGB"><feTurbulence type="fractalNoise" baseFrequency="0.3" numOctaves="1" seed="41"/><feColorMatrix type="matrix" values="2 0 0 0 -0.5  2 0 0 0 -0.5  2 0 0 0 -0.45  0 0 0 0 0.18"/><feGaussianBlur stdDeviation="0.5"/></filter><filter id="tspk" x="0" y="0" width="100%" height="100%" color-interpolation-filters="sRGB"><feTurbulence type="fractalNoise" baseFrequency="0.12" numOctaves="3" seed="5"/><feColorMatrix type="matrix" values="0 0 0 0 0.36  0 0 0 0 0.40  0 0 0 0 0.44  7 0 0 0 -4.1"/><feGaussianBlur stdDeviation="0.5"/></filter><filter id="tspkl" x="0" y="0" width="100%" height="100%" color-interpolation-filters="sRGB"><feTurbulence type="fractalNoise" baseFrequency="0.12" numOctaves="2" seed="11"/><feColorMatrix type="matrix" values="0 0 0 0 0.90  0 0 0 0 0.89  0 0 0 0 0.86  7 0 0 0 -3.7"/><feGaussianBlur stdDeviation="0.5"/></filter><filter id="tspkr" x="0" y="0" width="100%" height="100%" color-interpolation-filters="sRGB"><feTurbulence type="fractalNoise" baseFrequency="0.09" numOctaves="2" seed="17"/><feColorMatrix type="matrix" values="0 0 0 0 0.78  0 0 0 0 0.72  0 0 0 0 0.66  7 0 0 0 -4.4"/><feGaussianBlur stdDeviation="0.5"/></filter><filter id="blk" x="0" y="0" width="100%" height="100%" color-interpolation-filters="sRGB"><feTurbulence type="fractalNoise" baseFrequency="0.012 0.08" numOctaves="2" seed="21"/><feColorMatrix type="matrix" values="0 0 0 0 0.25  0 0 0 0 0.32  0 0 0 0 0.38  4 0 0 0 -2.1"/></filter><pattern id="houses" width="60" height="48" patternUnits="userSpaceOnUse"><rect width="60" height="48" fill="#b6b4ac"/><rect x="2" y="2" width="10" height="12" fill="#d8d2c6"/><rect x="14" y="3" width="15" height="10" fill="#dcd8d0"/><rect x="33" y="3" width="9" height="10" fill="#d8d2c6"/><rect x="44" y="2" width="12" height="10" fill="#cfc8ba"/><rect x="58" y="2" width="2" height="10" fill="#d4cfc4"/><rect x="1" y="18" width="14" height="11" fill="#d8d2c6"/><rect x="19" y="17" width="13" height="9" fill="#cfc8ba"/><rect x="34" y="16" width="13" height="10" fill="#c9c0b0"/><rect x="49" y="16" width="11" height="11" fill="#dcd8d0"/><rect x="1" y="33" width="9" height="13" fill="#cfc8ba"/><rect x="13" y="33" width="9" height="13" fill="#d8d2c6"/><rect x="26" y="33" width="9" height="11" fill="#c9c0b0"/><rect x="39" y="32" width="13" height="12" fill="#c9c0b0"/><rect x="56" y="32" width="4" height="12" fill="#cfc8ba"/></pattern><pattern id="rows" x="0" y="10" width="40" height="46" patternUnits="userSpaceOnUse"><rect y="0" width="40" height="5" fill="#34495c"/><rect y="23" width="40" height="3" fill="#5a7088"/></pattern><filter id="rowsf" x="0" y="0" width="100%" height="100%" color-interpolation-filters="sRGB"><feTurbulence type="fractalNoise" baseFrequency="0.05 0.12" numOctaves="2" seed="51"/><feColorMatrix type="matrix" values="0 0 0 0 1  0 0 0 0 1  0 0 0 0 1  5 0 0 0 -1.9"/></filter><mask id="rowsm" maskUnits="userSpaceOnUse" x="0" y="0" width="1113" height="563"><rect width="1113" height="563" filter="url(#rowsf)"/></mask></defs><rect width="1113" height="563" fill="url(#houses)"/><rect width="1113" height="563" filter="url(#tspkr)"/><rect width="1113" height="563" filter="url(#tspkl)"/><rect width="1113" height="563" filter="url(#tspk)"/><rect x="0" y="224" width="180" height="133" fill="#b89e7c" opacity="0.22"/><path d="M184 210V563" stroke="#7a8590" stroke-width="8"/><path d="M184 210V563" stroke="#98a2ac" stroke-width="4"/><path d="M731 370V563" stroke="#6a7888" stroke-width="8"/><path d="M731 370V563" stroke="#8a9aac" stroke-width="4"/><polyline points="0.0,357.0 530.0,357.0" fill="none" stroke="#4f5c6c" stroke-width="5.5" stroke-linejoin="round" stroke-opacity="0.9"/><polyline points="237.0,225.0 236.1,231.3 234.0,240.2 231.4,250.8 229.0,262.4 227.6,273.9 228.0,284.6 230.9,293.6 237.0,300.0 247.4,303.7 261.9,305.5 279.3,305.8 298.2,305.2 317.5,304.0 335.8,302.8 352.1,302.0 365.0,302.0 374.8,302.6 382.7,303.2 389.1,303.8 394.4,304.6 398.8,305.5 402.6,306.7 406.2,308.1 410.0,310.0 413.7,312.3 416.8,315.1 419.5,318.3 421.8,321.7 423.8,325.2 425.4,328.6 426.8,332.0 428.0,335.0 428.9,338.0 429.3,341.0 429.3,344.1 429.1,347.1 428.8,349.8 428.4,352.3 428.1,354.4 428.0,356.0" fill="none" stroke="#4f5c6c" stroke-width="5.5" stroke-linejoin="round" stroke-opacity="0.9"/><polyline points="295.0,360.0 295.1,367.1 295.4,376.9 295.7,388.5 295.9,401.2 296.1,414.5 296.1,427.5 295.7,439.6 295.0,450.0 293.8,459.0 292.0,467.3 290.0,475.0 287.8,482.3 285.5,489.3 283.3,496.2 281.5,503.0 280.0,510.0 278.9,517.3 278.1,525.0 277.5,532.7 277.1,540.2 276.7,547.3 276.5,553.6 276.2,559.0 276.0,563.0" fill="none" stroke="#4f5c6c" stroke-width="5.5" stroke-linejoin="round" stroke-opacity="0.9"/><polyline points="349.0,360.0 349.0,418.0" fill="none" stroke="#4f5c6c" stroke-width="5.5" stroke-linejoin="round" stroke-opacity="0.9"/><polyline points="404.0,360.0 405.5,363.8 407.6,368.8 410.1,374.6 412.9,381.2 415.6,388.3 418.2,395.6 420.4,402.9 422.0,410.0 423.0,416.8 423.6,423.5 423.9,430.3 424.0,437.3 424.0,444.6 423.9,452.4 423.9,460.9 424.0,470.0 424.3,480.7 424.5,493.1 424.8,506.5 425.1,520.2 425.4,533.5 425.6,545.5 425.8,555.6 426.0,563.0" fill="none" stroke="#4f5c6c" stroke-width="5.5" stroke-linejoin="round" stroke-opacity="0.9"/><polyline points="488.0,360.0 488.0,563.0" fill="none" stroke="#4f5c6c" stroke-width="5.5" stroke-linejoin="round" stroke-opacity="0.9"/><polyline points="488.0,415.0 601.0,415.0" fill="none" stroke="#4f5c6c" stroke-width="5.5" stroke-linejoin="round" stroke-opacity="0.9"/><polyline points="548.0,415.0 548.0,492.0" fill="none" stroke="#4f5c6c" stroke-width="5.5" stroke-linejoin="round" stroke-opacity="0.9"/><polyline points="610.0,415.0 610.0,492.0" fill="none" stroke="#4f5c6c" stroke-width="5.5" stroke-linejoin="round" stroke-opacity="0.9"/><polyline points="188.0,460.0 194.7,459.9 204.1,459.8 215.4,459.6 227.6,459.4 240.0,459.3 251.8,459.3 262.1,459.5 270.0,460.0 275.5,460.8 279.2,461.8 281.6,463.0 283.3,464.3 284.7,465.7 286.3,467.2 288.6,468.6 292.0,470.0 296.4,471.5 301.3,473.2 306.5,475.0 312.1,476.8 318.0,478.4 324.2,479.8 330.5,480.7 337.0,481.0 344.0,480.6 351.7,479.7 359.9,478.2 368.1,476.5 376.3,474.7 384.0,472.8 391.0,471.2 397.0,470.0 402.1,469.1 406.7,468.2 410.7,467.5 414.2,466.8 417.3,466.2 419.9,465.8 422.1,465.3 424.0,465.0" fill="none" stroke="#4f5c6c" stroke-width="5.5" stroke-linejoin="round" stroke-opacity="0.9"/><polyline points="19.0,365.0 19.1,376.8 19.2,393.2 19.4,412.8 19.6,434.2 19.7,456.0 19.6,476.8 19.4,495.3 19.0,510.0 18.2,521.4 17.2,531.0 15.9,538.9 14.5,545.6 13.1,551.0 11.8,555.6 10.8,559.5 10.0,563.0" fill="none" stroke="#4f5c6c" stroke-width="5.5" stroke-linejoin="round" stroke-opacity="0.9"/><polyline points="26.0,394.0 30.3,394.2 36.5,394.1 43.8,394.0 51.8,394.1 59.8,394.6 67.2,395.9 73.5,398.3 78.0,402.0 81.2,407.6 83.8,415.1 85.7,423.8 86.9,433.2 87.1,442.7 86.2,451.5 84.3,459.2 81.0,465.0 75.7,469.0 68.2,471.9 59.1,473.8 49.1,474.9 39.0,475.6 29.5,476.0 21.3,476.4 15.0,477.0 10.6,477.6 7.3,477.8 5.0,477.9 3.4,477.8 2.3,477.5 1.5,477.3 0.8,477.1 0.0,477.0" fill="none" stroke="#4f5c6c" stroke-width="5.5" stroke-linejoin="round" stroke-opacity="0.9"/><polyline points="143.0,465.0 140.5,467.5 137.2,470.6 133.3,474.3 128.9,478.6 124.3,483.3 119.4,488.5 114.6,494.0 110.0,500.0 105.1,507.0 99.8,515.3 94.1,524.3 88.4,533.7 83.0,542.8 78.1,551.0 74.0,557.9 71.0,563.0" fill="none" stroke="#4f5c6c" stroke-width="5.5" stroke-linejoin="round" stroke-opacity="0.9"/><polyline points="428.0,520.0 485.0,520.0" fill="none" stroke="#4f5c6c" stroke-width="5.5" stroke-linejoin="round" stroke-opacity="0.9"/><polyline points="672.0,443.0 672.0,563.0" fill="none" stroke="#4f5c6c" stroke-width="5.5" stroke-linejoin="round" stroke-opacity="0.9"/><polyline points="791.0,457.0 791.0,563.0" fill="none" stroke="#4f5c6c" stroke-width="5.5" stroke-linejoin="round" stroke-opacity="0.9"/><polyline points="791.0,525.0 796.2,526.0 803.1,527.2 811.3,528.7 820.5,530.3 830.3,532.1 840.4,534.0 850.4,536.0 860.0,538.0 869.8,540.2 880.4,542.6 891.4,545.3 902.4,547.9 913.2,550.6 923.3,553.0 932.3,555.2 940.0,557.0 946.3,558.4 951.7,559.6 956.2,560.5 960.0,561.2 963.1,561.8 965.8,562.2 968.0,562.6 970.0,563.0" fill="none" stroke="#4f5c6c" stroke-width="5.5" stroke-linejoin="round" stroke-opacity="0.9"/><polyline points="988.0,469.0 985.8,473.0 982.7,478.4 979.0,484.7 975.0,491.8 970.9,499.2 966.8,506.6 963.1,513.7 960.0,520.0 957.3,526.1 954.8,532.3 952.4,538.6 950.2,544.7 948.3,550.4 946.6,555.5 945.2,559.7 944.0,563.0" fill="none" stroke="#4f5c6c" stroke-width="5.5" stroke-linejoin="round" stroke-opacity="0.9"/><polyline points="979.0,502.0 983.9,503.0 990.4,504.4 998.0,506.1 1006.6,507.9 1015.7,509.8 1025.1,511.7 1034.3,513.5 1043.0,515.0 1051.9,516.4 1061.7,517.7 1071.9,519.1 1082.0,520.3 1091.6,521.5 1100.3,522.5 1107.6,523.3 1113.0,524.0" fill="none" stroke="#4f5c6c" stroke-width="5.5" stroke-linejoin="round" stroke-opacity="0.9"/><polyline points="1081.0,477.0 1081.0,511.0" fill="none" stroke="#4f5c6c" stroke-width="5.5" stroke-linejoin="round" stroke-opacity="0.9"/><polyline points="1096.0,528.0 1088.0,563.0" fill="none" stroke="#4f5c6c" stroke-width="5.5" stroke-linejoin="round" stroke-opacity="0.9"/><polyline points="923.0,468.0 915.0,490.0" fill="none" stroke="#4f5c6c" stroke-width="5.5" stroke-linejoin="round" stroke-opacity="0.9"/><polyline points="410.0,430.0 480.0,430.0" fill="none" stroke="#4f5c6c" stroke-width="5.5" stroke-linejoin="round" stroke-opacity="0.9"/><polyline points="237.0,407.0 295.0,407.0" fill="none" stroke="#4f5c6c" stroke-width="5.5" stroke-linejoin="round" stroke-opacity="0.9"/><polyline points="235.0,537.0 296.0,537.0" fill="none" stroke="#4f5c6c" stroke-width="5.5" stroke-linejoin="round" stroke-opacity="0.9"/><polyline points="356.0,539.0 424.0,538.0" fill="none" stroke="#4f5c6c" stroke-width="5.5" stroke-linejoin="round" stroke-opacity="0.9"/><polyline points="146.0,396.0 184.0,396.0" fill="none" stroke="#4f5c6c" stroke-width="5.5" stroke-linejoin="round" stroke-opacity="0.9"/><circle cx="915" cy="492" r="7" fill="#4f5c6c" fill-opacity="0.9"/><circle cx="147" cy="397" r="7" fill="#4f5c6c" fill-opacity="0.9"/><circle cx="355" cy="421" r="7" fill="#4f5c6c" fill-opacity="0.9"/><circle cx="237" cy="478" r="7" fill="#4f5c6c" fill-opacity="0.9"/><circle cx="238" cy="408" r="7" fill="#4f5c6c" fill-opacity="0.9"/><circle cx="548" cy="494" r="7" fill="#4f5c6c" fill-opacity="0.9"/><circle cx="610" cy="494" r="7" fill="#4f5c6c" fill-opacity="0.9"/><circle cx="235" cy="537" r="7" fill="#4f5c6c" fill-opacity="0.9"/><circle cx="296" cy="537" r="7" fill="#4f5c6c" fill-opacity="0.9"/><circle cx="356" cy="540" r="7" fill="#4f5c6c" fill-opacity="0.9"/><g clip-path="url(#dom)"><rect width="1113" height="563" fill="#b8cadc"/><rect width="1113" height="563" filter="url(#spkl)"/><rect width="1113" height="563" filter="url(#spkt)" opacity="0.7"/><rect width="1113" height="563" filter="url(#hf)"/><rect width="1113" height="563" filter="url(#blk)" opacity="0.4"/><rect width="1113" height="563" fill="url(#rows)" mask="url(#rowsm)" opacity="0.65"/><rect width="1113" height="563" filter="url(#spk)"/><path d="M456 0V190" stroke="#9ab0c8" stroke-width="6" opacity="0.7"/><polyline points="177.0,0.0 177.0,224.0" fill="none" stroke="#4a5f7a" stroke-width="9" stroke-linejoin="round" stroke-opacity="0.8"/><polyline points="731.0,0.0 731.0,563.0" fill="none" stroke="#4a5f7a" stroke-width="6" stroke-linejoin="round" stroke-opacity="0.7"/><polyline points="0.0,108.0 172.0,108.0" fill="none" stroke="#4a5f7a" stroke-width="6" stroke-linejoin="round" stroke-opacity="0.8"/><polyline points="0.0,118.0 172.0,118.0" fill="none" stroke="#4a5f7a" stroke-width="6" stroke-linejoin="round" stroke-opacity="0.8"/><polyline points="172.0,113.0 270.0,136.0 350.0,165.0 443.0,210.0 590.0,290.0 734.0,334.0 910.0,380.0 1113.0,412.0" fill="none" stroke="#4a5f7a" stroke-width="7" stroke-linejoin="round" stroke-opacity="0.55"/><polyline points="184.0,166.0 310.0,220.0 411.0,282.0 572.0,341.0 710.0,370.0" fill="none" stroke="#4a5f7a" stroke-width="6" stroke-linejoin="round" stroke-opacity="0.45"/><polyline points="867.0,0.0 867.0,370.0" fill="none" stroke="#4a5f7a" stroke-width="5" stroke-linejoin="round" stroke-opacity="0.45"/><polyline points="1032.0,0.0 1032.0,410.0" fill="none" stroke="#4a5f7a" stroke-width="5" stroke-linejoin="round" stroke-opacity="0.45"/><polyline points="0.0,357.0 530.0,357.0" fill="none" stroke="#4a5f7a" stroke-width="6" stroke-linejoin="round" stroke-opacity="0.6"/><polyline points="237.0,225.0 237.0,300.0 365.0,302.0 410.0,310.0 428.0,335.0 428.0,356.0" fill="none" stroke="#4a5f7a" stroke-width="6" stroke-linejoin="round" stroke-opacity="0.6"/><polyline points="740.0,190.0 830.0,190.0" fill="none" stroke="#4a5f7a" stroke-width="5" stroke-linejoin="round" stroke-opacity="0.4"/><rect x="747" y="79" width="84" height="58" fill="#5f8a78" opacity="0.8"/><rect x="770" y="150" width="52" height="48" fill="#d5e2ee" opacity="0.75"/><rect x="1036" y="55" width="30" height="27" fill="#5f8a78" opacity="0.6"/><path d="M872 103H949V139" fill="none" stroke="#5a78a0" stroke-width="7" opacity="0.6"/><rect x="747" y="224" width="46" height="84" fill="#c4d4e4" opacity="0.55"/><rect x="840" y="155" width="8" height="40" fill="#4a6a90" opacity="0.7"/><rect x="980" y="169" width="20" height="36" fill="#4a6480" opacity="0.6"/><circle cx="955" cy="163" r="6" fill="#2a70c0"/><rect x="14" y="26" width="74" height="22" fill="#8a9a88" opacity="0.8"/><rect x="105" y="0" width="66" height="100" fill="#7d90a6" opacity="0.9"/><rect width="1113" height="563" fill="url(#grid)"/></g><polyline points="0.0,221.0 180.0,224.0 450.0,357.0 550.0,393.0 703.0,450.0 1113.0,478.0" fill="none" stroke="#1848b0" stroke-width="2.6" stroke-linejoin="round"/><path d="M6.0 141.0L6.0 131.0M9.5 138.0L6.0 141.0L11.5 146.0M12.0 141.0L12.0 130.9M15.5 138.0L12.0 141.0L17.5 146.0M18.0 141.0L18.0 130.9M21.5 138.0L18.0 141.0L23.5 146.0M24.0 141.0L24.0 130.9M27.5 138.0L24.0 141.0L29.5 146.0M30.0 141.0L30.0 130.8M33.5 138.0L30.0 141.0L35.5 146.0M36.0 141.0L36.0 130.8M39.5 138.0L36.0 141.0L41.5 146.0M42.0 141.0L42.0 130.8M45.5 138.0L42.0 141.0L47.5 146.0M48.0 141.0L48.0 130.7M51.5 138.0L48.0 141.0L53.5 146.0M54.0 141.0L54.0 130.7M57.5 138.0L54.0 141.0L59.5 146.0M60.0 141.0L60.0 130.6M63.5 138.0L60.0 141.0L65.5 146.0M66.0 141.0L66.0 130.6M69.5 138.0L66.0 141.0L71.5 146.0M72.0 141.0L72.0 130.6M75.5 138.0L72.0 141.0L77.5 146.0M78.0 141.0L78.0 130.5M81.5 138.0L78.0 141.0L83.5 146.0M84.0 141.0L84.0 130.5M87.5 138.0L84.0 141.0L89.5 146.0M90.0 141.0L90.0 130.5M93.5 138.0L90.0 141.0L95.5 146.0M96.0 141.0L96.0 130.4M99.5 138.0L96.0 141.0L101.5 146.0M102.0 141.0L102.0 130.4M105.5 138.0L102.0 141.0L107.5 146.0M108.0 141.0L108.0 130.4M111.5 138.0L108.0 141.0L113.5 146.0M114.0 141.0L114.0 130.3M117.5 138.0L114.0 141.0L119.5 146.0M120.0 141.0L120.0 130.3M123.5 138.0L120.0 141.0L125.5 146.0M126.0 141.0L126.0 130.3M129.5 138.0L126.0 141.0L131.5 146.0M132.0 141.0L132.0 130.2M135.5 138.0L132.0 141.0L137.5 146.0M138.0 141.0L138.0 130.2M141.5 138.0L138.0 141.0L143.5 146.0M144.0 141.0L144.0 130.2M147.5 138.0L144.0 141.0L149.5 146.0M150.0 141.0L150.0 130.1M153.5 138.0L150.0 141.0L155.5 146.0M156.0 141.0L156.0 130.1M159.5 138.0L156.0 141.0L161.5 146.0M162.0 141.0L162.0 130.1M165.5 138.0L162.0 141.0L167.5 146.0" stroke="#1428c8" stroke-width="1.5" fill="none"/><polyline points="0.0,130.0 171.0,129.0" fill="none" stroke="#d91ee8" stroke-width="3" stroke-linejoin="round"/><polyline points="0.0,141.0 171.0,141.0" fill="none" stroke="#2f8ef0" stroke-width="2.7" stroke-linejoin="round"/><path d="M175.0 123.0L169.0 129.0L175.0 135.0" fill="none" stroke="#d020e0" stroke-width="1.8"/><path d="M175.0 135.0L169.0 141.0L175.0 147.0" fill="none" stroke="#2f8ef0" stroke-width="1.8"/><path d="M202.4 148.5L202.4 136.0M205.9 145.5L202.4 148.5L207.9 153.5M207.9 151.0L207.9 138.6M211.4 148.0L207.9 151.0L213.4 156.0M213.3 153.5L213.3 141.2M216.8 150.5L213.3 153.5L218.8 158.5M218.8 156.1L218.8 143.8M222.3 153.1L218.8 156.1L224.3 161.1M224.2 158.6L224.2 146.3M227.7 155.6L224.2 158.6L229.7 163.6M229.7 161.1L229.7 148.9M233.2 158.1L229.7 161.1L235.2 166.1M235.1 163.6L235.1 151.5M238.6 160.6L235.1 163.6L240.6 168.6M240.6 166.1L240.6 154.0M244.1 163.1L240.6 166.1L246.1 171.1M246.1 168.6L246.1 156.6M249.6 165.6L246.1 168.6L251.6 173.6M251.5 171.0L251.5 159.0M255.0 168.0L251.5 171.0L257.0 176.0M257.0 173.4L257.0 161.4M260.5 170.4L257.0 173.4L262.5 178.4M262.6 175.8L262.6 163.8M266.1 172.8L262.6 175.8L268.1 180.8M268.1 178.1L268.1 166.2M271.6 175.1L268.1 178.1L273.6 183.1M273.6 180.5L273.6 168.5M277.1 177.5L273.6 180.5L279.1 185.5M279.1 182.9L279.1 170.9M282.6 179.9L279.1 182.9L284.6 187.9M284.6 185.4L284.6 173.4M288.1 182.4L284.6 185.4L290.1 190.4M290.0 188.0L290.0 176.0M293.5 185.0L290.0 188.0L295.5 193.0M295.3 190.7L295.3 178.7M298.8 187.7L295.3 190.7L300.8 195.7M300.6 193.6L300.6 181.6M304.1 190.6L300.6 193.6L306.1 198.6M305.7 196.6L305.7 184.6M309.2 193.6L305.7 196.6L311.2 201.6M310.8 199.8L310.8 187.8M314.3 196.8L310.8 199.8L316.3 204.8M315.8 203.1L315.8 191.1M319.3 200.1L315.8 203.1L321.3 208.1M320.8 206.5L320.8 194.5M324.3 203.5L320.8 206.5L326.3 211.5M325.7 209.9L325.7 197.9M329.2 206.9L325.7 209.9L331.2 214.9M330.6 213.4L330.6 201.4M334.1 210.4L330.6 213.4L336.1 218.4M335.4 217.0L335.4 205.0M338.9 214.0L335.4 217.0L340.9 222.0M340.2 220.6L340.2 208.6M343.7 217.6L340.2 220.6L345.7 225.6M345.0 224.2L345.0 212.2M348.5 221.2L345.0 224.2L350.5 229.2M349.7 227.9L349.7 215.9M353.2 224.9L349.7 227.9L355.2 232.9M354.5 231.6L354.5 219.6M358.0 228.6L354.5 231.6L360.0 236.6M359.2 235.2L359.2 223.2M362.7 232.2L359.2 235.2L364.7 240.2M363.9 238.9L363.9 226.9M367.4 235.9L363.9 238.9L369.4 243.9M368.7 242.6L368.7 230.6M372.2 239.6L368.7 242.6L374.2 247.6M373.4 246.3L373.4 234.3M376.9 243.3L373.4 246.3L378.9 251.3M378.2 249.9L378.2 237.9M381.7 246.9L378.2 249.9L383.7 254.9M383.0 253.5L383.0 241.5M386.5 250.5L383.0 253.5L388.5 258.5M387.8 257.1L387.8 245.1M391.3 254.1L387.8 257.1L393.3 262.1M392.6 260.7L392.6 248.7M396.1 257.7L392.6 260.7L398.1 265.7M397.4 264.3L397.4 252.3M400.9 261.3L397.4 264.3L402.9 269.3M402.2 267.9L402.2 255.9M405.7 264.9L402.2 267.9L407.7 272.9M407.1 271.4L407.1 259.4M410.6 268.4L407.1 271.4L412.6 276.4M411.9 275.0L411.9 263.0M415.4 272.0L411.9 275.0L417.4 280.0M416.7 278.6L416.7 266.6M420.2 275.6L416.7 278.6L422.2 283.6M421.5 282.2L421.5 270.2M425.0 279.2L421.5 282.2L427.0 287.2M426.3 285.8L426.3 273.8M429.8 282.8L426.3 285.8L431.8 290.8M431.1 289.4L431.1 277.4M434.6 286.4L431.1 289.4L436.6 294.4M435.8 293.1L435.8 281.1M439.3 290.1L435.8 293.1L441.3 298.1M440.5 296.8L440.5 284.8M444.0 293.8L440.5 296.8L446.0 301.8M445.3 300.5L445.3 288.5M448.8 297.5L445.3 300.5L450.8 305.5M450.0 304.1L450.0 292.1M453.5 301.1L450.0 304.1L455.5 309.1M454.8 307.8L454.8 295.8M458.3 304.8L454.8 307.8L460.3 312.8M459.7 311.3L459.7 299.3M463.2 308.3L459.7 311.3L465.2 316.3M464.6 314.7L464.6 302.7M468.1 311.7L464.6 314.7L470.1 319.7M469.6 318.0L469.6 306.0M473.1 315.0L469.6 318.0L475.1 323.0M474.6 321.3L474.6 309.3M478.1 318.3L474.6 321.3L480.1 326.3M479.7 324.5L479.7 312.5M483.2 321.5L479.7 324.5L485.2 329.5M484.9 327.6L484.9 315.6M488.4 324.6L484.9 327.6L490.4 332.6M490.0 330.6L490.0 318.6M493.5 327.6L490.0 330.6L495.5 335.6M495.2 333.6L495.2 321.6M498.7 330.6L495.2 333.6L500.7 338.6M500.4 336.6L500.4 324.6M503.9 333.6L500.4 336.6L505.9 341.6M505.7 339.5L505.7 327.5M509.2 336.5L505.7 339.5L511.2 344.5M510.9 342.4L510.9 330.4M514.4 339.4L510.9 342.4L516.4 347.4M516.3 345.1L516.3 333.1M519.8 342.1L516.3 345.1L521.8 350.1M521.6 347.9L521.6 335.9M525.1 344.9L521.6 347.9L527.1 352.9M527.0 350.5L527.0 338.5M530.5 347.5L527.0 350.5L532.5 355.5M532.4 353.1L532.4 341.1M535.9 350.1L532.4 353.1L537.9 358.1M537.9 355.6L537.9 343.6M541.4 352.6L537.9 355.6L543.4 360.6M543.4 358.0L543.4 346.0M546.9 355.0L543.4 358.0L548.9 363.0M548.9 360.3L548.9 348.3M552.4 357.3L548.9 360.3L554.4 365.3M554.5 362.5L554.5 350.5M558.0 359.5L554.5 362.5L560.0 367.5M560.1 364.7L560.1 352.7M563.6 361.7L560.1 364.7L565.6 369.7M565.7 366.7L565.7 354.7M569.2 363.7L565.7 366.7L571.2 371.7M571.3 368.8L571.3 356.8M574.8 365.8L571.3 368.8L576.8 373.8M577.0 370.8L577.0 358.8M580.5 367.8L577.0 370.8L582.5 375.8M582.7 372.8L582.7 360.8M586.2 369.8L582.7 372.8L588.2 377.8M588.3 374.8L588.3 362.8M591.8 371.8L588.3 374.8L593.8 379.8M594.0 376.7L594.0 364.7M597.5 373.7L594.0 376.7L599.5 381.7M599.7 378.6L599.7 366.6M603.2 375.6L599.7 378.6L605.2 383.6M605.4 380.5L605.4 368.5M608.9 377.5L605.4 380.5L610.9 385.5M611.1 382.3L611.1 370.3M614.6 379.3L611.1 382.3L616.6 387.3M616.9 384.1L616.9 372.1M620.4 381.1L616.9 384.1L622.4 389.1M622.6 385.8L622.6 373.8M626.1 382.8L622.6 385.8L628.1 390.8M628.4 387.5L628.4 375.6M631.9 384.5L628.4 387.5L633.9 392.5M634.1 389.1L634.1 377.2M637.6 386.1L634.1 389.1L639.6 394.1M639.9 390.7L639.9 378.8M643.4 387.7L639.9 390.7L645.4 395.7M645.7 392.4L645.7 380.4M649.2 389.4L645.7 392.4L651.2 397.4M651.5 393.9L651.5 381.9M655.0 390.9L651.5 393.9L657.0 398.9M657.3 395.5L657.3 383.3M660.8 392.5L657.3 395.5L662.8 400.5M663.1 397.0L663.1 384.7M666.6 394.0L663.1 397.0L668.6 402.0M668.9 398.4L668.9 386.0M672.4 395.4L668.9 398.4L674.4 403.4M674.7 399.9L674.7 387.3M678.2 396.9L674.7 399.9L680.2 404.9M680.5 401.4L680.5 388.6M684.0 398.4L680.5 401.4L686.0 406.4M686.4 402.8L686.4 389.8M689.9 399.8L686.4 402.8L691.9 407.8M692.2 404.2L692.2 391.0M695.7 401.2L692.2 404.2L697.7 409.2M698.0 405.6L698.0 392.2M701.5 402.6L698.0 405.6L703.5 410.6M703.8 407.1L703.8 393.4M707.3 404.1L703.8 407.1L709.3 412.1M709.7 408.5L709.7 394.5M713.2 405.5L709.7 408.5L715.2 413.5" stroke="#1428c8" stroke-width="1.5" fill="none"/><polyline points="194.0,131.0 199.8,133.8 208.0,137.6 217.6,142.2 227.8,147.0 237.9,151.8 247.0,156.0 255.3,159.7 263.5,163.2 271.6,166.6 279.4,170.0 286.9,173.4 294.0,177.0 300.5,180.6 306.4,184.0 312.0,187.6 317.6,191.3 323.5,195.4 330.0,200.0 337.2,205.3 344.9,211.1 352.8,217.2 360.9,223.6 369.0,229.9 377.0,236.0 384.8,241.9 392.7,247.7 400.5,253.6 408.3,259.4 416.2,265.2 424.0,271.0 431.7,276.9 439.2,282.7 446.8,288.6 454.4,294.5 462.5,300.3 471.0,306.0 480.1,311.7 489.8,317.5 499.8,323.2 509.9,328.8 520.0,334.1 530.0,339.0 539.8,343.5 549.7,347.6 559.5,351.4 569.3,355.1 579.2,358.6 589.0,362.0 598.8,365.3 608.7,368.6 618.5,371.6 628.3,374.6 638.2,377.3 648.0,380.0 658.3,382.6 669.2,385.1 680.1,387.5 690.4,389.7 699.6,391.5 707.0,393.0 712.5,394.0 716.4,394.6 719.2,394.8 721.1,394.9 722.6,394.9 724.0,395.0" fill="none" stroke="#d91ee8" stroke-width="3" stroke-linejoin="round"/><polyline points="197.0,146.0 202.5,148.5 210.1,152.0 219.1,156.2 228.7,160.6 238.3,165.0 247.0,169.0 255.1,172.6 263.3,176.1 271.4,179.5 279.3,182.9 286.8,186.4 294.0,190.0 300.5,193.6 306.4,197.0 312.0,200.6 317.6,204.3 323.5,208.4 330.0,213.0 337.2,218.3 344.9,224.1 352.8,230.2 360.9,236.6 369.0,242.9 377.0,249.0 384.8,254.9 392.7,260.7 400.5,266.6 408.3,272.4 416.2,278.2 424.0,284.0 431.7,289.9 439.2,295.7 446.8,301.6 454.4,307.5 462.5,313.3 471.0,319.0 480.1,324.7 489.8,330.5 499.8,336.2 509.9,341.8 520.0,347.1 530.0,352.0 539.8,356.5 549.7,360.6 559.5,364.4 569.3,368.1 579.2,371.6 589.0,375.0 598.7,378.3 608.2,381.4 617.7,384.3 627.4,387.2 637.4,390.1 648.0,393.0 660.1,396.2 673.7,399.7 687.7,403.1 700.9,406.3 712.0,409.0 720.0,411.0" fill="none" stroke="#2f8ef0" stroke-width="2.7" stroke-linejoin="round"/><path d="M728.0 389.0L722.0 395.0L728.0 401.0" fill="none" stroke="#d020e0" stroke-width="1.8"/><path d="M201.0 126.0L195.0 131.0L201.0 136.0" fill="none" stroke="#d020e0" stroke-width="1.8"/><path d="M724.0 405.0L718.0 411.0L724.0 417.0" fill="none" stroke="#2f8ef0" stroke-width="1.8"/><path d="M204.0 141.0L198.0 146.0L204.0 151.0" fill="none" stroke="#2f8ef0" stroke-width="1.8"/><path d="M749.8 416.3L749.8 404.9M753.3 413.3L749.8 416.3L755.3 421.3M755.7 417.7L755.7 406.4M759.2 414.7L755.7 417.7L761.2 422.7M761.5 419.0L761.5 407.8M765.0 416.0L761.5 419.0L767.0 424.0M767.4 420.4L767.4 409.2M770.9 417.4L767.4 420.4L772.9 425.4M773.2 421.7L773.2 410.7M776.7 418.7L773.2 421.7L778.7 426.7M779.1 423.1L779.1 412.1M782.6 420.1L779.1 423.1L784.6 428.1M784.9 424.4L784.9 413.5M788.4 421.4L784.9 424.4L790.4 429.4M790.8 425.7L790.8 415.0M794.3 422.7L790.8 425.7L796.3 430.7M796.6 427.1L796.6 416.0M800.1 424.1L796.6 427.1L802.1 432.1M802.5 428.4L802.5 416.2M806.0 425.4L802.5 428.4L808.0 433.4M808.4 429.1L808.4 416.3M811.9 426.1L808.4 429.1L813.9 434.1M814.4 429.2L814.4 416.4M817.9 426.2L814.4 429.2L819.9 434.2M820.4 429.3L820.4 416.6M823.9 426.3L820.4 429.3L825.9 434.3M826.4 429.4L826.4 416.7M829.9 426.4L826.4 429.4L831.9 434.4M832.4 429.5L832.4 416.8M835.9 426.5L832.4 429.5L837.9 434.5M838.4 429.7L838.4 417.0M841.9 426.7L838.4 429.7L843.9 434.7M844.4 429.8L844.4 417.1M847.9 426.8L844.4 429.8L849.9 434.8M850.4 429.9L850.4 417.3M853.9 426.9L850.4 429.9L855.9 434.9M856.4 430.0L856.4 417.4M859.9 427.0L856.4 430.0L861.9 435.0M862.4 430.1L862.4 417.5M865.9 427.1L862.4 430.1L867.9 435.1M868.4 430.2L868.4 417.7M871.9 427.2L868.4 430.2L873.9 435.2M874.4 430.4L874.4 417.8M877.9 427.4L874.4 430.4L879.9 435.4M880.4 430.5L880.4 417.9M883.9 427.5L880.4 430.5L885.9 435.5M886.4 430.6L886.4 418.1M889.9 427.6L886.4 430.6L891.9 435.6M892.4 430.7L892.4 418.2M895.9 427.7L892.4 430.7L897.9 435.7M898.4 430.8L898.4 418.3M901.9 427.8L898.4 430.8L903.9 435.8M904.4 430.9L904.4 418.5M907.9 427.9L904.4 430.9L909.9 435.9M910.4 431.1L910.4 418.6M913.9 428.1L910.4 431.1L915.9 436.1M916.4 431.2L916.4 418.7M919.9 428.2L916.4 431.2L921.9 436.2M922.4 431.3L922.4 418.9M925.9 428.3L922.4 431.3L927.9 436.3M928.4 431.4L928.4 419.0M931.9 428.4L928.4 431.4L933.9 436.4M934.4 431.5L934.4 419.2M937.9 428.5L934.4 431.5L939.9 436.5M940.4 431.7L940.4 419.3M943.9 428.7L940.4 431.7L945.9 436.7M946.4 431.8L946.4 419.4M949.9 428.8L946.4 431.8L951.9 436.8M952.4 431.9L952.4 419.6M955.9 428.9L952.4 431.9L957.9 436.9M958.4 432.0L958.4 419.7M961.9 429.0L958.4 432.0L963.9 437.0M964.4 432.1L964.4 419.8M967.9 429.1L964.4 432.1L969.9 437.1M970.4 432.2L970.4 420.0M973.9 429.2L970.4 432.2L975.9 437.2M976.4 432.4L976.4 420.1M979.9 429.4L976.4 432.4L981.9 437.4M982.4 432.5L982.4 420.2M985.9 429.5L982.4 432.5L987.9 437.5M988.4 432.6L988.4 420.4M991.9 429.6L988.4 432.6L993.9 437.6M994.4 432.7L994.4 420.5M997.9 429.7L994.4 432.7L999.9 437.7M1000.4 432.8L1000.4 420.7M1003.9 429.8L1000.4 432.8L1005.9 437.8M1006.4 432.9L1006.4 420.8M1009.9 429.9L1006.4 432.9L1011.9 437.9M1012.4 433.1L1012.4 420.9M1015.9 430.1L1012.4 433.1L1017.9 438.1M1018.4 433.2L1018.4 421.1M1021.9 430.2L1018.4 433.2L1023.9 438.2M1024.4 433.3L1024.4 421.2M1027.9 430.3L1024.4 433.3L1029.9 438.3M1030.4 433.4L1030.4 421.3M1033.9 430.4L1030.4 433.4L1035.9 438.4M1036.4 433.5L1036.4 421.5M1039.9 430.5L1036.4 433.5L1041.9 438.5M1042.4 433.7L1042.4 421.6M1045.9 430.7L1042.4 433.7L1047.9 438.7M1048.4 433.8L1048.4 421.7M1051.9 430.8L1048.4 433.8L1053.9 438.8M1054.4 433.9L1054.4 421.9M1057.9 430.9L1054.4 433.9L1059.9 438.9M1060.4 434.0L1060.4 422.0M1063.9 431.0L1060.4 434.0L1065.9 439.0M1066.3 434.8L1066.3 422.8M1069.8 431.8L1066.3 434.8L1071.8 439.8M1072.3 435.6L1072.3 423.6M1075.8 432.6L1072.3 435.6L1077.8 440.6M1078.2 436.4L1078.2 424.4M1081.7 433.4L1078.2 436.4L1083.7 441.4M1084.2 437.2L1084.2 425.2M1087.7 434.2L1084.2 437.2L1089.7 442.2M1090.1 438.0L1090.1 426.0M1093.6 435.0L1090.1 438.0L1095.6 443.0M1096.1 438.8L1096.1 426.8M1099.6 435.8L1096.1 438.8L1101.6 443.8M1102.0 439.5L1102.0 427.5M1105.5 436.5L1102.0 439.5L1107.5 444.5" stroke="#1428c8" stroke-width="1.5" fill="none"/><polyline points="742.0,402.0 795.0,415.0 1060.0,421.0 1113.0,428.0" fill="none" stroke="#d91ee8" stroke-width="3" stroke-linejoin="round"/><polyline points="744.0,415.0 805.0,429.0 1060.0,434.0 1113.0,441.0" fill="none" stroke="#2f8ef0" stroke-width="2.7" stroke-linejoin="round"/><path d="M1117.0 422.0L1111.0 428.0L1117.0 434.0" fill="none" stroke="#d020e0" stroke-width="1.8"/><path d="M749.0 397.0L743.0 402.0L749.0 407.0" fill="none" stroke="#d020e0" stroke-width="1.8"/><path d="M1117.0 435.0L1111.0 441.0L1117.0 447.0" fill="none" stroke="#2f8ef0" stroke-width="1.8"/><path d="M751.0 410.0L745.0 415.0L751.0 420.0" fill="none" stroke="#2f8ef0" stroke-width="1.8"/></svg><div style="position:absolute;left:284px;top:565px;width:1px;height:20px;background:repeating-linear-gradient(to bottom,#a0a0a0 0 1px,transparent 1px 3px)"></div><div style="position:absolute;left:1407px;top:565px;width:1px;height:20px;background:repeating-linear-gradient(to bottom,#a0a0a0 0 1px,transparent 1px 3px)"></div><div style="position:absolute;left:985px;top:890px;width:1px;height:18px;background:repeating-linear-gradient(to bottom,#a0a0a0 0 1px,transparent 1px 3px)"></div><div style="position:absolute;left:838px;top:797px;width:20px;height:1px;background:repeating-linear-gradient(to right,#a0a0a0 0 1px,transparent 1px 3px)"></div></body></html>
